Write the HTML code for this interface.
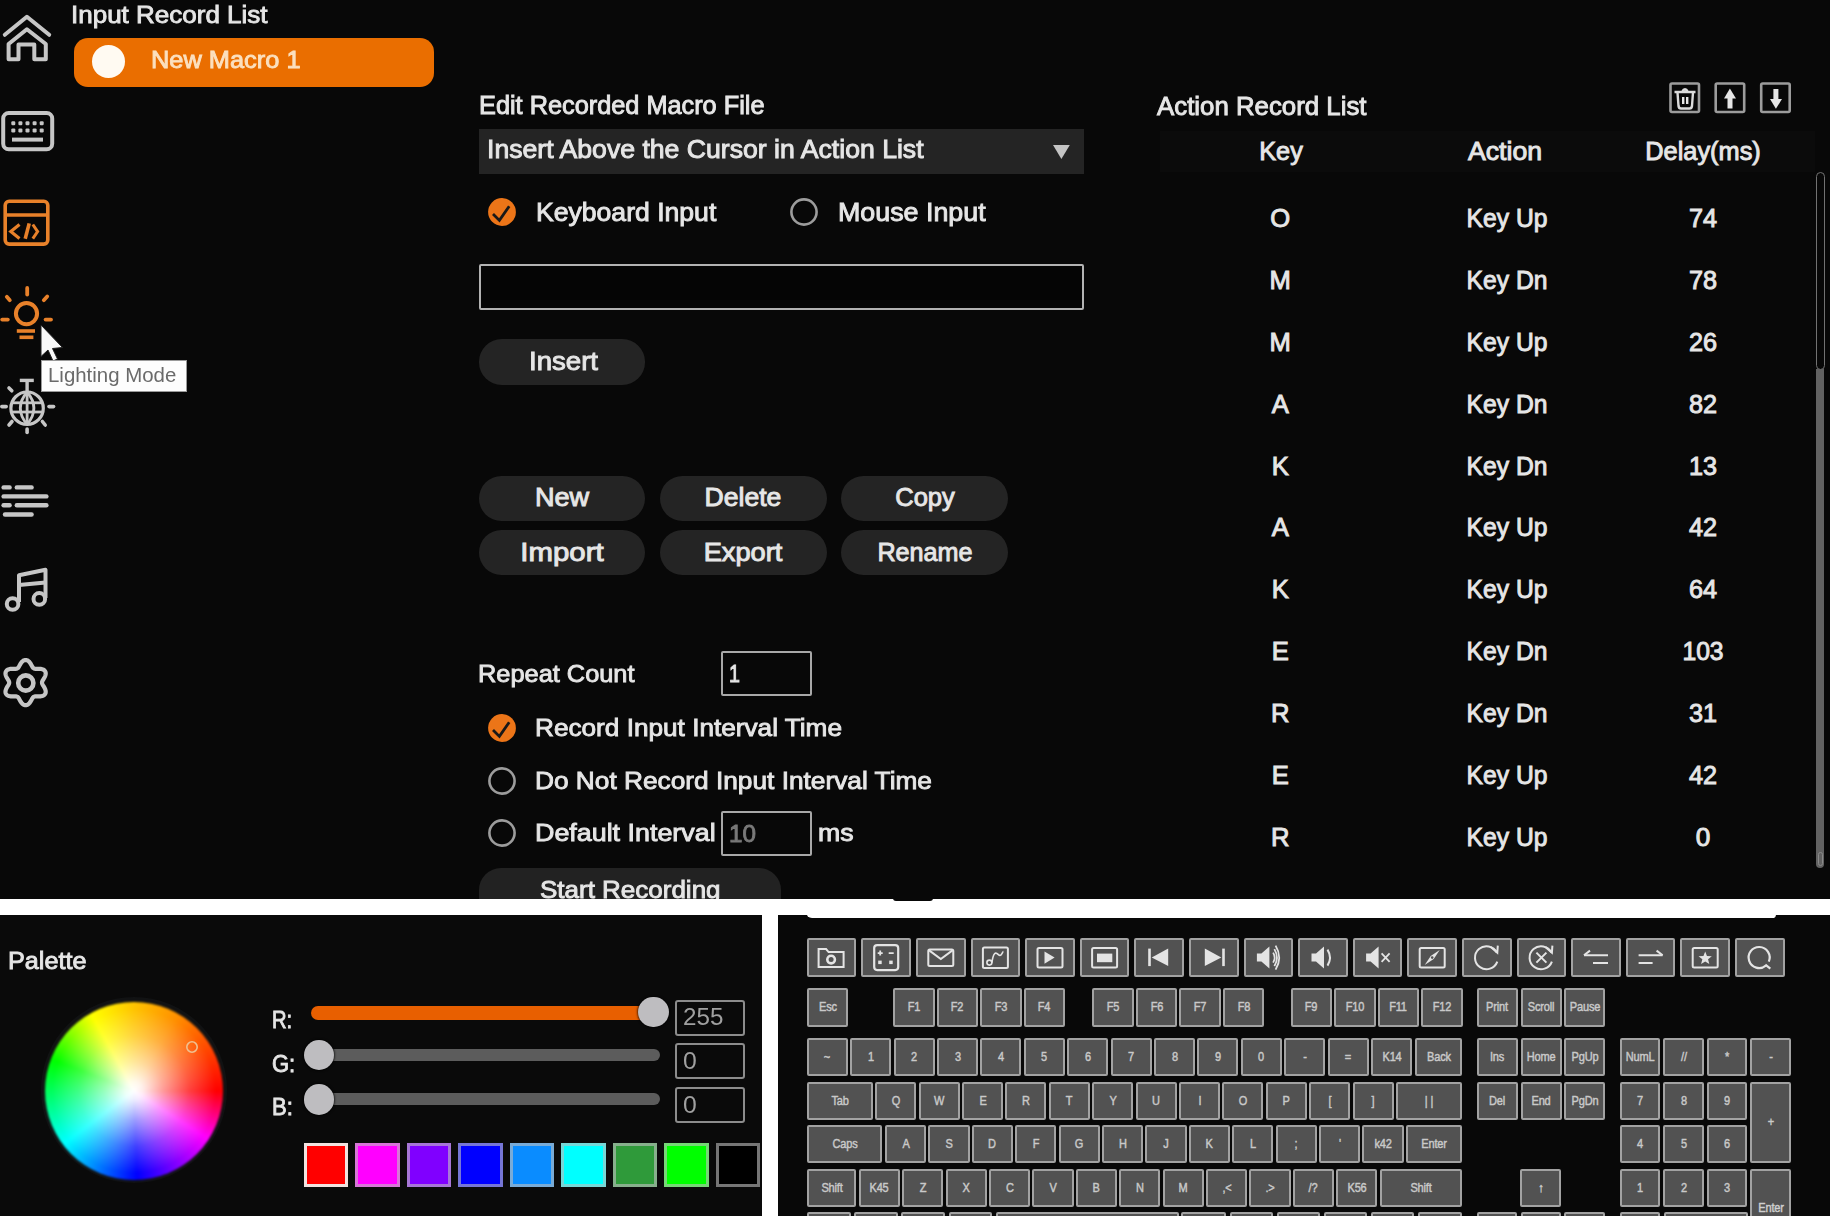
<!DOCTYPE html><html><head><meta charset="utf-8"><style>html,body{margin:0;padding:0;}body{width:1833px;height:1216px;overflow:hidden;position:relative;background:#fff;font-family:"Liberation Sans", sans-serif;}svg{position:absolute;overflow:visible}</style></head><body><div style="position:absolute;left:0px;top:0px;width:1830px;height:899px;background:#080808;"></div>
<div style="position:absolute;left:0px;top:915px;width:762px;height:301px;background:#0a0a0a;"></div>
<div style="position:absolute;left:778px;top:915px;width:1052px;height:301px;background:#080808;"></div>
<div style="position:absolute;left:806px;top:912px;width:970px;height:6px;background:#fff;border-radius:0 0 6px 10px"></div>
<div style="position:absolute;left:893px;top:896px;width:40px;height:5px;background:#080808;border-radius:0 0 3px 3px;"></div>
<svg width="80" height="720" style="left:0;top:0" viewBox="0 0 80 720" fill="none" stroke-linecap="butt">
<g stroke="#c6c6c6" stroke-width="4">
 <polyline points="4.8,34.8 26.9,16.8 49.2,34.8" stroke-linejoin="round" stroke-linecap="round"/>
 <path d="M8.6,59.2 V44 L26.9,29.2 L45.8,44 V59.2 H34.3 V44.6 H18.5 V59.2 Z" stroke-linejoin="round"/>
 <rect x="3.2" y="113.1" width="49" height="36.2" rx="5.5"/>
 <line x1="12" y1="139.6" x2="43" y2="139.6" stroke-width="4"/>
</g>
<g fill="#c6c6c6">
 <rect x="11.3" y="121.3" width="4" height="4" rx="1.2"/><rect x="18.4" y="121.3" width="4" height="4" rx="1.2"/><rect x="25.5" y="121.3" width="4" height="4" rx="1.2"/><rect x="32.6" y="121.3" width="4" height="4" rx="1.2"/><rect x="39.7" y="121.3" width="4" height="4" rx="1.2"/>
 <rect x="11.3" y="128.4" width="4" height="4" rx="1.2"/><rect x="18.4" y="128.4" width="4" height="4" rx="1.2"/><rect x="25.5" y="128.4" width="4" height="4" rx="1.2"/><rect x="32.6" y="128.4" width="4" height="4" rx="1.2"/><rect x="39.7" y="128.4" width="4" height="4" rx="1.2"/>
</g>
<g stroke="#e8812a" stroke-width="3.6">
 <rect x="5.2" y="201.3" width="42.6" height="42.8" rx="4"/>
 <line x1="5.2" y1="215" x2="47.8" y2="215" stroke-width="3.4"/>
 <polyline points="19.5,224.5 10.8,231.6 19.5,238.6" stroke-width="3.2"/>
 <line x1="29.2" y1="223.4" x2="25.2" y2="238.8" stroke-width="3.6"/>
 <polyline points="32.8,224.5 37.6,231.6 32.8,238.6" stroke-width="3"/>
 <circle cx="26.5" cy="313.6" r="10.6" stroke-width="4"/>
 <g stroke-width="3.8" stroke-linecap="round">
  <line x1="27.2" y1="288" x2="27.2" y2="294.5"/>
  <line x1="6.8" y1="296.8" x2="9.8" y2="300.2"/>
  <line x1="47.2" y1="296.5" x2="43.8" y2="300.2"/>
  <line x1="2.2" y1="319.6" x2="7.8" y2="319.6"/>
  <line x1="45.6" y1="319.6" x2="51" y2="319.6"/>
 </g>
 <line x1="16.8" y1="331" x2="35" y2="331" stroke-width="3.6"/>
 <line x1="19.5" y1="337.3" x2="33.4" y2="337.3" stroke-width="3.6"/>
</g>
<g stroke="#c6c6c6" stroke-width="3.2">
 <circle cx="27.1" cy="408.2" r="16.2"/>
 <path d="M27.1,392 Q13.5,408.2 27.1,424.4 M27.1,392 Q40.7,408.2 27.1,424.4" stroke-width="2.8"/>
 <line x1="27.1" y1="392" x2="27.1" y2="424.4" stroke-width="2.8"/>
 <line x1="11.5" y1="402.8" x2="42.7" y2="402.8" stroke-width="2.8"/>
 <line x1="11.5" y1="412" x2="42.7" y2="412" stroke-width="2.8"/>
 <line x1="19.8" y1="380.4" x2="33.8" y2="380.4" stroke-width="3.4"/>
 <path d="M27.1,380.4 V391" stroke-width="3.4"/>
 <g stroke-width="3.6" stroke-linecap="round">
  <line x1="1.8" y1="406.6" x2="6.2" y2="406.6"/>
  <line x1="49" y1="406.6" x2="53.6" y2="406.6"/>
  <line x1="9" y1="388" x2="11.8" y2="390.8"/>
  <line x1="9" y1="425" x2="12" y2="421.5"/>
  <line x1="45.2" y1="425" x2="42.4" y2="421.5"/>
  <line x1="27.1" y1="429" x2="27.1" y2="432.5"/>
 </g>
</g>
<g stroke="#c6c6c6" stroke-width="4.4" stroke-linecap="round">
 <line x1="3.6" y1="487.4" x2="9.6" y2="487.4"/><line x1="16.8" y1="487.4" x2="31.6" y2="487.4"/>
 <line x1="3.6" y1="496.4" x2="46.4" y2="496.4"/>
 <line x1="3.6" y1="505.3" x2="9.6" y2="505.3"/><line x1="16.8" y1="505.3" x2="46.4" y2="505.3"/>
 <line x1="5" y1="514.5" x2="31.6" y2="514.5"/>
</g>
<g stroke="#c6c6c6" stroke-width="4">
 <circle cx="12.6" cy="604" r="5.8"/>
 <circle cx="39.3" cy="598.9" r="5.8"/>
 <polyline points="19,602 19,575.2 45.5,569.8 45.5,598" stroke-linejoin="round"/>
 <line x1="19" y1="585" x2="45.5" y2="582.5"/>
 <path d="M25.60,660.00L26.19,660.05L26.77,660.18L27.35,660.41L27.90,660.71L28.43,661.09L28.94,661.54L29.41,662.04L29.85,662.59L30.27,663.17L30.65,663.76L31.00,664.37L31.33,664.97L31.64,665.55L31.94,666.10L32.22,666.61L32.51,667.08L32.81,667.49L33.11,667.85L33.44,668.15L33.80,668.40L34.19,668.58L34.61,668.72L35.08,668.81L35.59,668.85L36.14,668.87L36.73,668.86L37.35,668.84L38.01,668.82L38.69,668.81L39.39,668.81L40.10,668.84L40.80,668.91L41.50,669.02L42.17,669.18L42.81,669.39L43.40,669.66L43.95,669.99L44.43,670.37L44.84,670.81L45.17,671.30L45.43,671.83L45.60,672.41L45.69,673.02L45.71,673.65L45.64,674.30L45.51,674.96L45.31,675.62L45.06,676.28L44.76,676.92L44.44,677.55L44.09,678.16L43.74,678.74L43.39,679.30L43.06,679.83L42.76,680.34L42.50,680.82L42.29,681.29L42.13,681.73L42.03,682.17L42.00,682.60L42.03,683.03L42.13,683.47L42.29,683.91L42.50,684.38L42.76,684.86L43.06,685.37L43.39,685.90L43.74,686.46L44.09,687.04L44.44,687.65L44.76,688.28L45.06,688.92L45.31,689.58L45.51,690.24L45.64,690.90L45.71,691.55L45.69,692.18L45.60,692.79L45.43,693.37L45.17,693.90L44.84,694.39L44.43,694.83L43.95,695.21L43.40,695.54L42.81,695.81L42.17,696.02L41.50,696.18L40.80,696.29L40.10,696.36L39.39,696.39L38.69,696.39L38.01,696.38L37.35,696.36L36.73,696.34L36.14,696.33L35.59,696.35L35.08,696.39L34.61,696.48L34.19,696.62L33.80,696.80L33.44,697.05L33.11,697.35L32.81,697.71L32.51,698.12L32.22,698.59L31.94,699.10L31.64,699.65L31.33,700.23L31.00,700.83L30.65,701.44L30.27,702.03L29.85,702.61L29.41,703.16L28.94,703.66L28.43,704.11L27.90,704.49L27.35,704.79L26.77,705.02L26.19,705.15L25.60,705.20L25.01,705.15L24.43,705.02L23.85,704.79L23.30,704.49L22.77,704.11L22.26,703.66L21.79,703.16L21.35,702.61L20.93,702.03L20.55,701.44L20.20,700.83L19.87,700.23L19.56,699.65L19.26,699.10L18.98,698.59L18.69,698.12L18.39,697.71L18.09,697.35L17.76,697.05L17.40,696.80L17.01,696.62L16.59,696.48L16.12,696.39L15.61,696.35L15.06,696.33L14.47,696.34L13.85,696.36L13.19,696.38L12.51,696.39L11.81,696.39L11.10,696.36L10.40,696.29L9.70,696.18L9.03,696.02L8.39,695.81L7.80,695.54L7.25,695.21L6.77,694.83L6.36,694.39L6.03,693.90L5.77,693.37L5.60,692.79L5.51,692.18L5.49,691.55L5.56,690.90L5.69,690.24L5.89,689.58L6.14,688.92L6.44,688.28L6.76,687.65L7.11,687.04L7.46,686.46L7.81,685.90L8.14,685.37L8.44,684.86L8.70,684.38L8.91,683.91L9.07,683.47L9.17,683.03L9.20,682.60L9.17,682.17L9.07,681.73L8.91,681.29L8.70,680.82L8.44,680.34L8.14,679.83L7.81,679.30L7.46,678.74L7.11,678.16L6.76,677.55L6.44,676.92L6.14,676.28L5.89,675.62L5.69,674.96L5.56,674.30L5.49,673.65L5.51,673.02L5.60,672.41L5.77,671.83L6.03,671.30L6.36,670.81L6.77,670.37L7.25,669.99L7.80,669.66L8.39,669.39L9.03,669.18L9.70,669.02L10.40,668.91L11.10,668.84L11.81,668.81L12.51,668.81L13.19,668.82L13.85,668.84L14.47,668.86L15.06,668.87L15.61,668.85L16.12,668.81L16.59,668.72L17.01,668.58L17.40,668.40L17.76,668.15L18.09,667.85L18.39,667.49L18.69,667.08L18.98,666.61L19.26,666.10L19.56,665.55L19.87,664.97L20.20,664.37L20.55,663.76L20.93,663.17L21.35,662.59L21.79,662.04L22.26,661.54L22.77,661.09L23.30,660.71L23.85,660.41L24.43,660.18L25.01,660.05L25.60,660.00Z" stroke-width="4.2" stroke-linejoin="round"/>
 <circle cx="25.8" cy="683" r="7.6" stroke-width="4.6"/>
</g>
<polygon points="41,325 41,356.5 48,350 53,361 57.5,359 52.5,348.5 62.5,347.5" fill="#fafafa" stroke="#222" stroke-width="1"/>
</svg>
<div style="position:absolute;left:40.5px;top:360px;width:146.5px;height:32px;background:#fdfdfd;border:1px solid #9a9a9a;box-sizing:border-box;"></div>
<div id="t0" style="position:absolute;left:47.5px;transform-origin:0 0;top:365.5px;font-size:19.39px;line-height:1;font-weight:400;color:#6a6a6a;white-space:nowrap;transform:scaleX(1.0535);">Lighting Mode</div>
<div id="t1" style="position:absolute;left:70.5px;transform-origin:0 0;top:3.5px;font-size:23.68px;line-height:1;font-weight:400;color:#e6e6e6;white-space:nowrap;transform:scaleX(1.0984);-webkit-text-stroke:0.85px #e6e6e6;">Input Record List</div>
<div style="position:absolute;left:73.5px;top:38.2px;width:360.7px;height:49.1px;background:#ea6e00;border-radius:14px;"></div>
<div style="position:absolute;left:92.1px;top:45.4px;width:32.8px;height:32.8px;border-radius:50%;background:#fffaf2"></div>
<div id="t2" style="position:absolute;left:151.3px;transform-origin:0 0;top:49.4px;font-size:23.55px;line-height:1;font-weight:400;color:#fbe0bf;white-space:nowrap;transform:scaleX(1.0779);-webkit-text-stroke:0.85px #fbe0bf;">New Macro 1</div>
<div id="t3" style="position:absolute;left:478.5px;transform-origin:0 0;top:93.4px;font-size:24.93px;line-height:1;font-weight:400;color:#e6e6e6;white-space:nowrap;transform:scaleX(1.0154);-webkit-text-stroke:0.9px #e6e6e6;">Edit Recorded Macro File</div>
<div style="position:absolute;left:478.7px;top:128.5px;width:605px;height:45.5px;background:#242424;"></div>
<div id="t4" style="position:absolute;left:486.8px;transform-origin:0 0;top:136.9px;font-size:25.48px;line-height:1;font-weight:400;color:#e6e6e6;white-space:nowrap;transform:scaleX(1.0454);-webkit-text-stroke:0.92px #e6e6e6;">Insert Above the Cursor in Action List</div>
<svg width="20" height="20" style="left:1050px;top:142px"><polygon points="3,3 19.8,3 11.4,17" fill="#c4c4c4"/></svg>
<svg width="40" height="40" style="left:481.8px;top:191.8px"><circle cx="20" cy="20" r="13.9" fill="#ec7518"/><polyline points="11,22 17.4,28.4 27.2,14.2" fill="none" stroke="#181818" stroke-width="2.8"/></svg>
<div id="t5" style="position:absolute;left:535.8px;transform-origin:0 0;top:199.8px;font-size:25.07px;line-height:1;font-weight:400;color:#e6e6e6;white-space:nowrap;transform:scaleX(1.0606);-webkit-text-stroke:0.9px #e6e6e6;">Keyboard Input</div>
<svg width="40" height="40" style="left:783.6px;top:191.8px"><circle cx="20" cy="20" r="12.6" fill="none" stroke="#9c9c9c" stroke-width="2.6"/></svg>
<div id="t6" style="position:absolute;left:837.9px;transform-origin:0 0;top:199.7px;font-size:25.07px;line-height:1;font-weight:400;color:#e6e6e6;white-space:nowrap;transform:scaleX(1.0701);-webkit-text-stroke:0.9px #e6e6e6;">Mouse Input</div>
<div style="position:absolute;left:479px;top:264px;width:604.5px;height:45.6px;border:2.5px solid #b2b2b2;border-radius:2px;box-sizing:border-box;background:#050505;"></div>
<div style="position:absolute;left:479.3px;top:339.3px;width:166px;height:45.7px;background:#242424;border-radius:22.85px;"></div>
<div id="t7" style="position:absolute;left:528.6px;transform-origin:0 0;top:347.9px;font-size:26.18px;line-height:1;font-weight:400;color:#e6e6e6;white-space:nowrap;transform:scaleX(1.0548);-webkit-text-stroke:0.94px #e6e6e6;">Insert</div>
<div style="position:absolute;left:478.5px;top:475.5px;width:166.5px;height:45.5px;background:#242424;border-radius:22.75px;"></div>
<div id="t8" style="position:absolute;left:561.8px;transform-origin:0 0;top:484.8px;font-size:25.35px;line-height:1;font-weight:400;color:#e6e6e6;white-space:nowrap;transform:translateX(-50%) scaleX(1.0695);transform-origin:50% 0;-webkit-text-stroke:0.91px #e6e6e6;">New</div>
<div style="position:absolute;left:660px;top:475.5px;width:166.5px;height:45.5px;background:#242424;border-radius:22.75px;"></div>
<div id="t9" style="position:absolute;left:743.2px;transform-origin:0 0;top:484.8px;font-size:25.35px;line-height:1;font-weight:400;color:#e6e6e6;white-space:nowrap;transform:translateX(-50%) scaleX(1.0482);transform-origin:50% 0;-webkit-text-stroke:0.91px #e6e6e6;">Delete</div>
<div style="position:absolute;left:841.3px;top:475.5px;width:166.5px;height:45.5px;background:#242424;border-radius:22.75px;"></div>
<div id="t10" style="position:absolute;left:924.5px;transform-origin:0 0;top:484.8px;font-size:25.35px;line-height:1;font-weight:400;color:#e6e6e6;white-space:nowrap;transform:translateX(-50%) scaleX(1.0061);transform-origin:50% 0;-webkit-text-stroke:0.91px #e6e6e6;">Copy</div>
<div style="position:absolute;left:478.5px;top:530.3px;width:166.5px;height:45.200000000000045px;background:#242424;border-radius:22.600000000000023px;"></div>
<div id="t11" style="position:absolute;left:561.8px;transform-origin:0 0;top:539.5px;font-size:25.35px;line-height:1;font-weight:400;color:#e6e6e6;white-space:nowrap;transform:translateX(-50%) scaleX(1.1592);transform-origin:50% 0;-webkit-text-stroke:0.91px #e6e6e6;">Import</div>
<div style="position:absolute;left:660px;top:530.3px;width:166.5px;height:45.200000000000045px;background:#242424;border-radius:22.600000000000023px;"></div>
<div id="t12" style="position:absolute;left:743.2px;transform-origin:0 0;top:539.5px;font-size:25.35px;line-height:1;font-weight:400;color:#e6e6e6;white-space:nowrap;transform:translateX(-50%) scaleX(1.0735);transform-origin:50% 0;-webkit-text-stroke:0.91px #e6e6e6;">Export</div>
<div style="position:absolute;left:841.3px;top:530.3px;width:166.5px;height:45.200000000000045px;background:#242424;border-radius:22.600000000000023px;"></div>
<div id="t13" style="position:absolute;left:924.5px;transform-origin:0 0;top:539.5px;font-size:25.35px;line-height:1;font-weight:400;color:#e6e6e6;white-space:nowrap;transform:translateX(-50%) scaleX(0.9939);transform-origin:50% 0;-webkit-text-stroke:0.91px #e6e6e6;">Rename</div>
<div id="t14" style="position:absolute;left:478.3px;transform-origin:0 0;top:662.4px;font-size:23.82px;line-height:1;font-weight:400;color:#e6e6e6;white-space:nowrap;transform:scaleX(1.0651);-webkit-text-stroke:0.86px #e6e6e6;">Repeat Count</div>
<div style="position:absolute;left:720.5px;top:651px;width:91px;height:45.3px;border:2.5px solid #a8a8a8;border-radius:2px;box-sizing:border-box;"></div>
<div id="t15" style="position:absolute;left:729.3px;transform-origin:0 0;top:662.4px;font-size:23.82px;line-height:1;font-weight:400;color:#e6e6e6;white-space:nowrap;transform:scaleX(0.8290);-webkit-text-stroke:0.86px #e6e6e6;">1</div>
<svg width="40" height="40" style="left:481.6px;top:708.4px"><circle cx="20" cy="20" r="13.9" fill="#ec7518"/><polyline points="11,22 17.4,28.4 27.2,14.2" fill="none" stroke="#181818" stroke-width="2.8"/></svg>
<div id="t16" style="position:absolute;left:535.1px;transform-origin:0 0;top:715.8px;font-size:24.38px;line-height:1;font-weight:400;color:#e6e6e6;white-space:nowrap;transform:scaleX(1.0739);-webkit-text-stroke:0.88px #e6e6e6;">Record Input Interval Time</div>
<svg width="40" height="40" style="left:481.6px;top:760.8px"><circle cx="20" cy="20" r="12.6" fill="none" stroke="#9c9c9c" stroke-width="2.6"/></svg>
<div id="t17" style="position:absolute;left:535.1px;transform-origin:0 0;top:768.8px;font-size:24.38px;line-height:1;font-weight:400;color:#e6e6e6;white-space:nowrap;transform:scaleX(1.0773);-webkit-text-stroke:0.88px #e6e6e6;">Do Not Record Input Interval Time</div>
<svg width="40" height="40" style="left:481.6px;top:813.1px"><circle cx="20" cy="20" r="12.6" fill="none" stroke="#9c9c9c" stroke-width="2.6"/></svg>
<div id="t18" style="position:absolute;left:535.1px;transform-origin:0 0;top:821.2px;font-size:24.38px;line-height:1;font-weight:400;color:#e6e6e6;white-space:nowrap;transform:scaleX(1.1017);-webkit-text-stroke:0.88px #e6e6e6;">Default Interval</div>
<div style="position:absolute;left:720.5px;top:811.3px;width:91px;height:45.2px;border:2.5px solid #a8a8a8;border-radius:2px;box-sizing:border-box;"></div>
<div id="t19" style="position:absolute;left:729.3px;transform-origin:0 0;top:821.7px;font-size:23.82px;line-height:1;font-weight:400;color:#7a7a7a;white-space:nowrap;transform:scaleX(1.0171);-webkit-text-stroke:0.86px #7a7a7a;">10</div>
<div id="t20" style="position:absolute;left:817.6px;transform-origin:0 0;top:821.2px;font-size:24.38px;line-height:1;font-weight:400;color:#e6e6e6;white-space:nowrap;transform:scaleX(1.0955);-webkit-text-stroke:0.88px #e6e6e6;">ms</div>
<div style="position:absolute;left:0;top:0;width:1830px;height:899px;overflow:hidden"><div style="position:absolute;left:479.2px;top:868px;width:301.8px;height:60px;border-radius:22px;background:#222"></div>
<div id="t21" style="position:absolute;left:540.1px;transform-origin:0 0;top:877.8px;font-size:24.38px;line-height:1;font-weight:400;color:#e6e6e6;white-space:nowrap;transform:scaleX(1.0661);-webkit-text-stroke:0.88px #e6e6e6;">Start Recording</div>
</div>
<div style="position:absolute;left:1160px;top:131px;width:655px;height:41px;background:#0b0b0b;"></div>
<div id="t22" style="position:absolute;left:1157.4px;transform-origin:0 0;top:93.9px;font-size:25.35px;line-height:1;font-weight:400;color:#e6e6e6;white-space:nowrap;transform:scaleX(1.0189);-webkit-text-stroke:0.91px #e6e6e6;">Action Record List</div>
<svg width="140" height="40" style="left:1660px;top:78px" viewBox="1660 78 140 40">
<g fill="none" stroke="#9c9c9c" stroke-width="2.6">
<rect x="1670.5" y="83.5" width="28.5" height="28.5" rx="1.5"/>
<rect x="1715.7" y="83.5" width="28.5" height="28.5" rx="1.5"/>
<rect x="1761.2" y="83.5" width="28.5" height="28.5" rx="1.5"/>
</g>
<g fill="none" stroke="#dcdcdc" stroke-width="2.4">
<path d="M1674.5,92 H1695.5 M1682,92 Q1685,86.5 1688,92 M1677.5,92.5 L1678.5,106 Q1678.8,108.5 1681,108.5 H1689.5 Q1691.7,108.5 1692,106 L1693,92.5"/>
</g>
<g fill="#e6e6e6">
<rect x="1682" y="97" width="2.4" height="7"/><rect x="1686" y="97" width="2.4" height="7"/>
<polygon points="1729.9,88.5 1736,98.5 1724,98.5"/><rect x="1727.5" y="97" width="5" height="11.5"/>
<polygon points="1775.9,108.8 1782,99 1770,99"/><rect x="1773.4" y="89" width="5" height="11"/>
</g>
</svg>
<div id="t23" style="position:absolute;left:1280.5px;transform-origin:0 0;top:138.6px;font-size:25.76px;line-height:1;font-weight:400;color:#e6e6e6;white-space:nowrap;transform:translateX(-50%) scaleX(0.9806);transform-origin:50% 0;-webkit-text-stroke:0.93px #e6e6e6;">Key</div>
<div id="t24" style="position:absolute;left:1505.3px;transform-origin:0 0;top:138.6px;font-size:25.76px;line-height:1;font-weight:400;color:#e6e6e6;white-space:nowrap;transform:translateX(-50%) scaleX(1.0352);transform-origin:50% 0;-webkit-text-stroke:0.93px #e6e6e6;">Action</div>
<div id="t25" style="position:absolute;left:1703.0px;transform-origin:0 0;top:138.6px;font-size:25.76px;line-height:1;font-weight:400;color:#e6e6e6;white-space:nowrap;transform:translateX(-50%) scaleX(0.9847);transform-origin:50% 0;-webkit-text-stroke:0.93px #e6e6e6;">Delay(ms)</div>
<div id="t26" style="position:absolute;left:1280.2px;transform-origin:0 0;top:205.8px;font-size:25.62px;line-height:1;font-weight:400;color:#e6e6e6;white-space:nowrap;transform:translateX(-50%) scaleX(1.0000);transform-origin:50% 0;-webkit-text-stroke:0.92px #e6e6e6;">O</div>
<div id="t27" style="position:absolute;left:1506.7px;transform-origin:0 0;top:205.8px;font-size:25.62px;line-height:1;font-weight:400;color:#e6e6e6;white-space:nowrap;transform:translateX(-50%) scaleX(0.9630);transform-origin:50% 0;-webkit-text-stroke:0.92px #e6e6e6;">Key Up</div>
<div id="t28" style="position:absolute;left:1703.0px;transform-origin:0 0;top:205.8px;font-size:25.62px;line-height:1;font-weight:400;color:#e6e6e6;white-space:nowrap;transform:translateX(-50%) scaleX(0.9865);transform-origin:50% 0;-webkit-text-stroke:0.92px #e6e6e6;">74</div>
<div id="t29" style="position:absolute;left:1280.2px;transform-origin:0 0;top:267.7px;font-size:25.62px;line-height:1;font-weight:400;color:#e6e6e6;white-space:nowrap;transform:translateX(-50%) scaleX(1.0000);transform-origin:50% 0;-webkit-text-stroke:0.92px #e6e6e6;">M</div>
<div id="t30" style="position:absolute;left:1506.7px;transform-origin:0 0;top:267.7px;font-size:25.62px;line-height:1;font-weight:400;color:#e6e6e6;white-space:nowrap;transform:translateX(-50%) scaleX(0.9630);transform-origin:50% 0;-webkit-text-stroke:0.92px #e6e6e6;">Key Dn</div>
<div id="t31" style="position:absolute;left:1703.0px;transform-origin:0 0;top:267.7px;font-size:25.62px;line-height:1;font-weight:400;color:#e6e6e6;white-space:nowrap;transform:translateX(-50%) scaleX(0.9865);transform-origin:50% 0;-webkit-text-stroke:0.92px #e6e6e6;">78</div>
<div id="t32" style="position:absolute;left:1280.2px;transform-origin:0 0;top:329.6px;font-size:25.62px;line-height:1;font-weight:400;color:#e6e6e6;white-space:nowrap;transform:translateX(-50%) scaleX(1.0000);transform-origin:50% 0;-webkit-text-stroke:0.92px #e6e6e6;">M</div>
<div id="t33" style="position:absolute;left:1506.7px;transform-origin:0 0;top:329.6px;font-size:25.62px;line-height:1;font-weight:400;color:#e6e6e6;white-space:nowrap;transform:translateX(-50%) scaleX(0.9630);transform-origin:50% 0;-webkit-text-stroke:0.92px #e6e6e6;">Key Up</div>
<div id="t34" style="position:absolute;left:1703.0px;transform-origin:0 0;top:329.6px;font-size:25.62px;line-height:1;font-weight:400;color:#e6e6e6;white-space:nowrap;transform:translateX(-50%) scaleX(0.9865);transform-origin:50% 0;-webkit-text-stroke:0.92px #e6e6e6;">26</div>
<div id="t35" style="position:absolute;left:1280.2px;transform-origin:0 0;top:391.6px;font-size:25.62px;line-height:1;font-weight:400;color:#e6e6e6;white-space:nowrap;transform:translateX(-50%) scaleX(1.0000);transform-origin:50% 0;-webkit-text-stroke:0.92px #e6e6e6;">A</div>
<div id="t36" style="position:absolute;left:1506.7px;transform-origin:0 0;top:391.6px;font-size:25.62px;line-height:1;font-weight:400;color:#e6e6e6;white-space:nowrap;transform:translateX(-50%) scaleX(0.9630);transform-origin:50% 0;-webkit-text-stroke:0.92px #e6e6e6;">Key Dn</div>
<div id="t37" style="position:absolute;left:1703.0px;transform-origin:0 0;top:391.6px;font-size:25.62px;line-height:1;font-weight:400;color:#e6e6e6;white-space:nowrap;transform:translateX(-50%) scaleX(0.9865);transform-origin:50% 0;-webkit-text-stroke:0.92px #e6e6e6;">82</div>
<div id="t38" style="position:absolute;left:1280.2px;transform-origin:0 0;top:453.5px;font-size:25.62px;line-height:1;font-weight:400;color:#e6e6e6;white-space:nowrap;transform:translateX(-50%) scaleX(1.0000);transform-origin:50% 0;-webkit-text-stroke:0.92px #e6e6e6;">K</div>
<div id="t39" style="position:absolute;left:1506.7px;transform-origin:0 0;top:453.5px;font-size:25.62px;line-height:1;font-weight:400;color:#e6e6e6;white-space:nowrap;transform:translateX(-50%) scaleX(0.9630);transform-origin:50% 0;-webkit-text-stroke:0.92px #e6e6e6;">Key Dn</div>
<div id="t40" style="position:absolute;left:1703.0px;transform-origin:0 0;top:453.5px;font-size:25.62px;line-height:1;font-weight:400;color:#e6e6e6;white-space:nowrap;transform:translateX(-50%) scaleX(0.9865);transform-origin:50% 0;-webkit-text-stroke:0.92px #e6e6e6;">13</div>
<div id="t41" style="position:absolute;left:1280.2px;transform-origin:0 0;top:515.4px;font-size:25.62px;line-height:1;font-weight:400;color:#e6e6e6;white-space:nowrap;transform:translateX(-50%) scaleX(1.0000);transform-origin:50% 0;-webkit-text-stroke:0.92px #e6e6e6;">A</div>
<div id="t42" style="position:absolute;left:1506.7px;transform-origin:0 0;top:515.4px;font-size:25.62px;line-height:1;font-weight:400;color:#e6e6e6;white-space:nowrap;transform:translateX(-50%) scaleX(0.9630);transform-origin:50% 0;-webkit-text-stroke:0.92px #e6e6e6;">Key Up</div>
<div id="t43" style="position:absolute;left:1703.0px;transform-origin:0 0;top:515.4px;font-size:25.62px;line-height:1;font-weight:400;color:#e6e6e6;white-space:nowrap;transform:translateX(-50%) scaleX(0.9865);transform-origin:50% 0;-webkit-text-stroke:0.92px #e6e6e6;">42</div>
<div id="t44" style="position:absolute;left:1280.2px;transform-origin:0 0;top:577.3px;font-size:25.62px;line-height:1;font-weight:400;color:#e6e6e6;white-space:nowrap;transform:translateX(-50%) scaleX(1.0000);transform-origin:50% 0;-webkit-text-stroke:0.92px #e6e6e6;">K</div>
<div id="t45" style="position:absolute;left:1506.7px;transform-origin:0 0;top:577.3px;font-size:25.62px;line-height:1;font-weight:400;color:#e6e6e6;white-space:nowrap;transform:translateX(-50%) scaleX(0.9630);transform-origin:50% 0;-webkit-text-stroke:0.92px #e6e6e6;">Key Up</div>
<div id="t46" style="position:absolute;left:1703.0px;transform-origin:0 0;top:577.3px;font-size:25.62px;line-height:1;font-weight:400;color:#e6e6e6;white-space:nowrap;transform:translateX(-50%) scaleX(0.9865);transform-origin:50% 0;-webkit-text-stroke:0.92px #e6e6e6;">64</div>
<div id="t47" style="position:absolute;left:1280.2px;transform-origin:0 0;top:639.2px;font-size:25.62px;line-height:1;font-weight:400;color:#e6e6e6;white-space:nowrap;transform:translateX(-50%) scaleX(1.0000);transform-origin:50% 0;-webkit-text-stroke:0.92px #e6e6e6;">E</div>
<div id="t48" style="position:absolute;left:1506.7px;transform-origin:0 0;top:639.2px;font-size:25.62px;line-height:1;font-weight:400;color:#e6e6e6;white-space:nowrap;transform:translateX(-50%) scaleX(0.9630);transform-origin:50% 0;-webkit-text-stroke:0.92px #e6e6e6;">Key Dn</div>
<div id="t49" style="position:absolute;left:1703.0px;transform-origin:0 0;top:639.2px;font-size:25.62px;line-height:1;font-weight:400;color:#e6e6e6;white-space:nowrap;transform:translateX(-50%) scaleX(0.9637);transform-origin:50% 0;-webkit-text-stroke:0.92px #e6e6e6;">103</div>
<div id="t50" style="position:absolute;left:1280.2px;transform-origin:0 0;top:701.1px;font-size:25.62px;line-height:1;font-weight:400;color:#e6e6e6;white-space:nowrap;transform:translateX(-50%) scaleX(1.0000);transform-origin:50% 0;-webkit-text-stroke:0.92px #e6e6e6;">R</div>
<div id="t51" style="position:absolute;left:1506.7px;transform-origin:0 0;top:701.1px;font-size:25.62px;line-height:1;font-weight:400;color:#e6e6e6;white-space:nowrap;transform:translateX(-50%) scaleX(0.9630);transform-origin:50% 0;-webkit-text-stroke:0.92px #e6e6e6;">Key Dn</div>
<div id="t52" style="position:absolute;left:1703.0px;transform-origin:0 0;top:701.1px;font-size:25.62px;line-height:1;font-weight:400;color:#e6e6e6;white-space:nowrap;transform:translateX(-50%) scaleX(0.9865);transform-origin:50% 0;-webkit-text-stroke:0.92px #e6e6e6;">31</div>
<div id="t53" style="position:absolute;left:1280.2px;transform-origin:0 0;top:763.0px;font-size:25.62px;line-height:1;font-weight:400;color:#e6e6e6;white-space:nowrap;transform:translateX(-50%) scaleX(1.0000);transform-origin:50% 0;-webkit-text-stroke:0.92px #e6e6e6;">E</div>
<div id="t54" style="position:absolute;left:1506.7px;transform-origin:0 0;top:763.0px;font-size:25.62px;line-height:1;font-weight:400;color:#e6e6e6;white-space:nowrap;transform:translateX(-50%) scaleX(0.9630);transform-origin:50% 0;-webkit-text-stroke:0.92px #e6e6e6;">Key Up</div>
<div id="t55" style="position:absolute;left:1703.0px;transform-origin:0 0;top:763.0px;font-size:25.62px;line-height:1;font-weight:400;color:#e6e6e6;white-space:nowrap;transform:translateX(-50%) scaleX(0.9865);transform-origin:50% 0;-webkit-text-stroke:0.92px #e6e6e6;">42</div>
<div id="t56" style="position:absolute;left:1280.2px;transform-origin:0 0;top:824.9px;font-size:25.62px;line-height:1;font-weight:400;color:#e6e6e6;white-space:nowrap;transform:translateX(-50%) scaleX(1.0000);transform-origin:50% 0;-webkit-text-stroke:0.92px #e6e6e6;">R</div>
<div id="t57" style="position:absolute;left:1506.7px;transform-origin:0 0;top:824.9px;font-size:25.62px;line-height:1;font-weight:400;color:#e6e6e6;white-space:nowrap;transform:translateX(-50%) scaleX(0.9630);transform-origin:50% 0;-webkit-text-stroke:0.92px #e6e6e6;">Key Up</div>
<div id="t58" style="position:absolute;left:1703.0px;transform-origin:0 0;top:824.9px;font-size:25.62px;line-height:1;font-weight:400;color:#e6e6e6;white-space:nowrap;transform:translateX(-50%) scaleX(1.0226);transform-origin:50% 0;-webkit-text-stroke:0.92px #e6e6e6;">0</div>
<div style="position:absolute;left:1815.5px;top:172px;width:9px;height:198px;border:1.8px solid #727272;border-radius:4.5px;box-sizing:border-box;"></div>
<div style="position:absolute;left:1816px;top:369px;width:8px;height:499px;background:#626262;border-radius:0 0 4px 4px;"></div>
<div style="position:absolute;left:1817.5px;top:852px;width:5px;height:14px;border:1.2px solid #8a8a8a;border-radius:2.5px;box-sizing:border-box;"></div>
<div id="t59" style="position:absolute;left:7.9px;transform-origin:0 0;top:948.5px;font-size:24.79px;line-height:1;font-weight:400;color:#e6e6e6;white-space:nowrap;transform:scaleX(1.0176);-webkit-text-stroke:0.89px #e6e6e6;">Palette</div>
<div style="position:absolute;left:40.7px;top:997.1px;width:186px;height:186px;border-radius:50%;background:#111213"></div>
<div style="position:absolute;left:44.7px;top:1002.1px;width:178px;height:178px;border-radius:50%;filter:blur(0.8px);background:radial-gradient(circle closest-side, #ffffff 0%, rgba(255,255,255,0.92) 10%, rgba(255,255,255,0.6) 33%, rgba(255,255,255,0.25) 62%, rgba(255,255,255,0) 92%),conic-gradient(from 0deg, #ffc400 0deg, #ff9000 30deg, #ff0000 90deg, #ff00ff 123deg, #0000ff 178deg, #00ffff 233deg, #00ff00 291deg, #ffff00 331deg, #ffc400 360deg)"></div>
<svg width="20" height="20" style="left:181.5px;top:1037.3px"><circle cx="10" cy="10" r="5.2" fill="none" stroke="#f0c090" stroke-width="1.6"/></svg>
<div id="t60" style="position:absolute;left:271.7px;transform-origin:0 0;top:1007.6px;font-size:23.96px;line-height:1;font-weight:400;color:#e6e6e6;white-space:nowrap;transform:scaleX(0.8433);-webkit-text-stroke:0.86px #e6e6e6;">R:</div>
<div id="t61" style="position:absolute;left:271.7px;transform-origin:0 0;top:1051.6px;font-size:23.96px;line-height:1;font-weight:400;color:#e6e6e6;white-space:nowrap;transform:scaleX(0.9179);-webkit-text-stroke:0.86px #e6e6e6;">G:</div>
<div id="t62" style="position:absolute;left:271.7px;transform-origin:0 0;top:1094.6px;font-size:23.96px;line-height:1;font-weight:400;color:#e6e6e6;white-space:nowrap;transform:scaleX(0.9197);-webkit-text-stroke:0.86px #e6e6e6;">B:</div>
<div style="position:absolute;left:311.2px;top:1005.5px;width:349.2px;height:14px;background:#e85f00;border-radius:7px;"></div>
<div style="position:absolute;left:311.2px;top:1048.8px;width:349.2px;height:12.7px;background:#5c5c5c;border-radius:6.35px;"></div>
<div style="position:absolute;left:311.2px;top:1092.7px;width:349.2px;height:12.7px;background:#5c5c5c;border-radius:6.35px;"></div>
<div style="position:absolute;left:638.4px;top:996.5px;width:30.4px;height:30.4px;border-radius:50%;background:#bebdc0;box-shadow:0 0 2px 1px rgba(0,0,0,0.6)"></div>
<div style="position:absolute;left:304.0px;top:1040.1px;width:30.4px;height:30.4px;border-radius:50%;background:#bebdc0;box-shadow:0 0 2px 1px rgba(0,0,0,0.6)"></div>
<div style="position:absolute;left:304.0px;top:1084.2px;width:30.4px;height:30.4px;border-radius:50%;background:#bebdc0;box-shadow:0 0 2px 1px rgba(0,0,0,0.6)"></div>
<div style="position:absolute;left:674.6px;top:999.6px;width:70px;height:35.999999999999886px;border:2.6px solid #8c8c8c;border-radius:3px;box-sizing:border-box;"></div>
<div id="t63" style="position:absolute;left:683.0px;transform-origin:0 0;top:1006.0px;font-size:23.13px;line-height:1;font-weight:400;color:#a0a0a0;white-space:nowrap;transform:scaleX(1.0455);">255</div>
<div style="position:absolute;left:674.6px;top:1043.2px;width:70px;height:36.200000000000045px;border:2.6px solid #8c8c8c;border-radius:3px;box-sizing:border-box;"></div>
<div id="t64" style="position:absolute;left:683.0px;transform-origin:0 0;top:1050.2px;font-size:23.13px;line-height:1;font-weight:400;color:#a0a0a0;white-space:nowrap;transform:scaleX(1.0708);">0</div>
<div style="position:absolute;left:674.6px;top:1087.1px;width:70px;height:36.100000000000136px;border:2.6px solid #8c8c8c;border-radius:3px;box-sizing:border-box;"></div>
<div id="t65" style="position:absolute;left:683.0px;transform-origin:0 0;top:1093.8px;font-size:23.13px;line-height:1;font-weight:400;color:#a0a0a0;white-space:nowrap;transform:scaleX(1.0708);">0</div>
<div style="position:absolute;left:303.9px;top:1143.1px;width:44.6px;height:44.3px;background:#ff0000;border:3.4px solid #f2e2e0;box-sizing:border-box;"></div>
<div style="position:absolute;left:355.4px;top:1143.1px;width:44.6px;height:44.3px;background:#ff00ff;border:3.4px solid rgba(190,190,190,0.62);box-sizing:border-box;"></div>
<div style="position:absolute;left:406.9px;top:1143.1px;width:44.6px;height:44.3px;background:#8000ff;border:3.4px solid rgba(190,190,190,0.62);box-sizing:border-box;"></div>
<div style="position:absolute;left:458.4px;top:1143.1px;width:44.6px;height:44.3px;background:#0000ff;border:3.4px solid rgba(190,190,190,0.62);box-sizing:border-box;"></div>
<div style="position:absolute;left:509.9px;top:1143.1px;width:44.6px;height:44.3px;background:#0a8cff;border:3.4px solid rgba(190,190,190,0.62);box-sizing:border-box;"></div>
<div style="position:absolute;left:561.4px;top:1143.1px;width:44.6px;height:44.3px;background:#00ffff;border:3.4px solid rgba(190,190,190,0.62);box-sizing:border-box;"></div>
<div style="position:absolute;left:612.9px;top:1143.1px;width:44.6px;height:44.3px;background:#2f9a3a;border:3.4px solid rgba(190,190,190,0.62);box-sizing:border-box;"></div>
<div style="position:absolute;left:664.4px;top:1143.1px;width:44.6px;height:44.3px;background:#00ff00;border:3.4px solid rgba(190,190,190,0.62);box-sizing:border-box;"></div>
<div style="position:absolute;left:715.9px;top:1143.1px;width:44.6px;height:44.3px;background:#000000;border:3.4px solid rgba(190,190,190,0.62);box-sizing:border-box;"></div>
<div style="position:absolute;left:778px;top:915px;width:1052px;height:301px;overflow:hidden">
<div style="position:absolute;left:28.7px;top:23.1px;width:49.8px;height:39.0px;background:#525252;border:2px solid #a2a2a2;box-sizing:border-box;border-radius:2px;"></div>
<div style="position:absolute;left:83.3px;top:23.1px;width:49.8px;height:39.0px;background:#525252;border:2px solid #a2a2a2;box-sizing:border-box;border-radius:2px;"></div>
<div style="position:absolute;left:137.9px;top:23.1px;width:49.8px;height:39.0px;background:#525252;border:2px solid #a2a2a2;box-sizing:border-box;border-radius:2px;"></div>
<div style="position:absolute;left:192.5px;top:23.1px;width:49.8px;height:39.0px;background:#525252;border:2px solid #a2a2a2;box-sizing:border-box;border-radius:2px;"></div>
<div style="position:absolute;left:247.1px;top:23.1px;width:49.8px;height:39.0px;background:#525252;border:2px solid #a2a2a2;box-sizing:border-box;border-radius:2px;"></div>
<div style="position:absolute;left:301.7px;top:23.1px;width:49.8px;height:39.0px;background:#525252;border:2px solid #a2a2a2;box-sizing:border-box;border-radius:2px;"></div>
<div style="position:absolute;left:356.3px;top:23.1px;width:49.8px;height:39.0px;background:#525252;border:2px solid #a2a2a2;box-sizing:border-box;border-radius:2px;"></div>
<div style="position:absolute;left:410.9px;top:23.1px;width:49.8px;height:39.0px;background:#525252;border:2px solid #a2a2a2;box-sizing:border-box;border-radius:2px;"></div>
<div style="position:absolute;left:465.5px;top:23.1px;width:49.8px;height:39.0px;background:#525252;border:2px solid #a2a2a2;box-sizing:border-box;border-radius:2px;"></div>
<div style="position:absolute;left:520.1px;top:23.1px;width:49.8px;height:39.0px;background:#525252;border:2px solid #a2a2a2;box-sizing:border-box;border-radius:2px;"></div>
<div style="position:absolute;left:574.7px;top:23.1px;width:49.8px;height:39.0px;background:#525252;border:2px solid #a2a2a2;box-sizing:border-box;border-radius:2px;"></div>
<div style="position:absolute;left:629.3px;top:23.1px;width:49.8px;height:39.0px;background:#525252;border:2px solid #a2a2a2;box-sizing:border-box;border-radius:2px;"></div>
<div style="position:absolute;left:683.9px;top:23.1px;width:49.8px;height:39.0px;background:#525252;border:2px solid #a2a2a2;box-sizing:border-box;border-radius:2px;"></div>
<div style="position:absolute;left:738.5px;top:23.1px;width:49.8px;height:39.0px;background:#525252;border:2px solid #a2a2a2;box-sizing:border-box;border-radius:2px;"></div>
<div style="position:absolute;left:793.1px;top:23.1px;width:49.8px;height:39.0px;background:#525252;border:2px solid #a2a2a2;box-sizing:border-box;border-radius:2px;"></div>
<div style="position:absolute;left:847.7px;top:23.1px;width:49.8px;height:39.0px;background:#525252;border:2px solid #a2a2a2;box-sizing:border-box;border-radius:2px;"></div>
<div style="position:absolute;left:902.3px;top:23.1px;width:49.8px;height:39.0px;background:#525252;border:2px solid #a2a2a2;box-sizing:border-box;border-radius:2px;"></div>
<div style="position:absolute;left:956.9px;top:23.1px;width:49.8px;height:39.0px;background:#525252;border:2px solid #a2a2a2;box-sizing:border-box;border-radius:2px;"></div>
<div style="position:absolute;left:28.7px;top:73.0px;width:41.5px;height:38.6px;background:#525252;border:2px solid #a2a2a2;box-sizing:border-box;border-radius:2px;"></div>
<div style="position:absolute;left:115.3px;top:73.0px;width:41.5px;height:38.6px;background:#525252;border:2px solid #a2a2a2;box-sizing:border-box;border-radius:2px;"></div>
<div style="position:absolute;left:158.7px;top:73.0px;width:41.5px;height:38.6px;background:#525252;border:2px solid #a2a2a2;box-sizing:border-box;border-radius:2px;"></div>
<div style="position:absolute;left:202.1px;top:73.0px;width:41.5px;height:38.6px;background:#525252;border:2px solid #a2a2a2;box-sizing:border-box;border-radius:2px;"></div>
<div style="position:absolute;left:245.5px;top:73.0px;width:41.5px;height:38.6px;background:#525252;border:2px solid #a2a2a2;box-sizing:border-box;border-radius:2px;"></div>
<div style="position:absolute;left:314.2px;top:73.0px;width:41.5px;height:38.6px;background:#525252;border:2px solid #a2a2a2;box-sizing:border-box;border-radius:2px;"></div>
<div style="position:absolute;left:357.7px;top:73.0px;width:41.5px;height:38.6px;background:#525252;border:2px solid #a2a2a2;box-sizing:border-box;border-radius:2px;"></div>
<div style="position:absolute;left:401.2px;top:73.0px;width:41.5px;height:38.6px;background:#525252;border:2px solid #a2a2a2;box-sizing:border-box;border-radius:2px;"></div>
<div style="position:absolute;left:444.7px;top:73.0px;width:41.5px;height:38.6px;background:#525252;border:2px solid #a2a2a2;box-sizing:border-box;border-radius:2px;"></div>
<div style="position:absolute;left:512.5px;top:73.0px;width:41.5px;height:38.6px;background:#525252;border:2px solid #a2a2a2;box-sizing:border-box;border-radius:2px;"></div>
<div style="position:absolute;left:556.0px;top:73.0px;width:41.5px;height:38.6px;background:#525252;border:2px solid #a2a2a2;box-sizing:border-box;border-radius:2px;"></div>
<div style="position:absolute;left:599.6px;top:73.0px;width:41.5px;height:38.6px;background:#525252;border:2px solid #a2a2a2;box-sizing:border-box;border-radius:2px;"></div>
<div style="position:absolute;left:643.2px;top:73.0px;width:41.5px;height:38.6px;background:#525252;border:2px solid #a2a2a2;box-sizing:border-box;border-radius:2px;"></div>
<div style="position:absolute;left:698.8px;top:73.0px;width:41.0px;height:38.6px;background:#525252;border:2px solid #a2a2a2;box-sizing:border-box;border-radius:2px;"></div>
<div style="position:absolute;left:742.5px;top:73.0px;width:41.0px;height:38.6px;background:#525252;border:2px solid #a2a2a2;box-sizing:border-box;border-radius:2px;"></div>
<div style="position:absolute;left:786.1px;top:73.0px;width:41.0px;height:38.6px;background:#525252;border:2px solid #a2a2a2;box-sizing:border-box;border-radius:2px;"></div>
<div style="position:absolute;left:28.7px;top:122.7px;width:41.2px;height:38.6px;background:#525252;border:2px solid #a2a2a2;box-sizing:border-box;border-radius:2px;"></div>
<div style="position:absolute;left:72.1px;top:122.7px;width:41.2px;height:38.6px;background:#525252;border:2px solid #a2a2a2;box-sizing:border-box;border-radius:2px;"></div>
<div style="position:absolute;left:115.5px;top:122.7px;width:41.2px;height:38.6px;background:#525252;border:2px solid #a2a2a2;box-sizing:border-box;border-radius:2px;"></div>
<div style="position:absolute;left:158.9px;top:122.7px;width:41.2px;height:38.6px;background:#525252;border:2px solid #a2a2a2;box-sizing:border-box;border-radius:2px;"></div>
<div style="position:absolute;left:202.3px;top:122.7px;width:41.2px;height:38.6px;background:#525252;border:2px solid #a2a2a2;box-sizing:border-box;border-radius:2px;"></div>
<div style="position:absolute;left:245.7px;top:122.7px;width:41.2px;height:38.6px;background:#525252;border:2px solid #a2a2a2;box-sizing:border-box;border-radius:2px;"></div>
<div style="position:absolute;left:289.1px;top:122.7px;width:41.2px;height:38.6px;background:#525252;border:2px solid #a2a2a2;box-sizing:border-box;border-radius:2px;"></div>
<div style="position:absolute;left:332.5px;top:122.7px;width:41.2px;height:38.6px;background:#525252;border:2px solid #a2a2a2;box-sizing:border-box;border-radius:2px;"></div>
<div style="position:absolute;left:375.9px;top:122.7px;width:41.2px;height:38.6px;background:#525252;border:2px solid #a2a2a2;box-sizing:border-box;border-radius:2px;"></div>
<div style="position:absolute;left:419.3px;top:122.7px;width:41.2px;height:38.6px;background:#525252;border:2px solid #a2a2a2;box-sizing:border-box;border-radius:2px;"></div>
<div style="position:absolute;left:462.7px;top:122.7px;width:41.2px;height:38.6px;background:#525252;border:2px solid #a2a2a2;box-sizing:border-box;border-radius:2px;"></div>
<div style="position:absolute;left:506.1px;top:122.7px;width:41.2px;height:38.6px;background:#525252;border:2px solid #a2a2a2;box-sizing:border-box;border-radius:2px;"></div>
<div style="position:absolute;left:549.5px;top:122.7px;width:41.2px;height:38.6px;background:#525252;border:2px solid #a2a2a2;box-sizing:border-box;border-radius:2px;"></div>
<div style="position:absolute;left:592.9px;top:122.7px;width:41.2px;height:38.6px;background:#525252;border:2px solid #a2a2a2;box-sizing:border-box;border-radius:2px;"></div>
<div style="position:absolute;left:637.2px;top:122.7px;width:47.0px;height:38.6px;background:#525252;border:2px solid #a2a2a2;box-sizing:border-box;border-radius:2px;"></div>
<div style="position:absolute;left:698.8px;top:122.7px;width:41.0px;height:38.6px;background:#525252;border:2px solid #a2a2a2;box-sizing:border-box;border-radius:2px;"></div>
<div style="position:absolute;left:742.5px;top:122.7px;width:41.0px;height:38.6px;background:#525252;border:2px solid #a2a2a2;box-sizing:border-box;border-radius:2px;"></div>
<div style="position:absolute;left:786.1px;top:122.7px;width:41.0px;height:38.6px;background:#525252;border:2px solid #a2a2a2;box-sizing:border-box;border-radius:2px;"></div>
<div style="position:absolute;left:841.6px;top:122.7px;width:40.8px;height:38.6px;background:#525252;border:2px solid #a2a2a2;box-sizing:border-box;border-radius:2px;"></div>
<div style="position:absolute;left:885.1px;top:122.7px;width:40.8px;height:38.6px;background:#525252;border:2px solid #a2a2a2;box-sizing:border-box;border-radius:2px;"></div>
<div style="position:absolute;left:928.7px;top:122.7px;width:40.8px;height:38.6px;background:#525252;border:2px solid #a2a2a2;box-sizing:border-box;border-radius:2px;"></div>
<div style="position:absolute;left:972.2px;top:122.7px;width:40.8px;height:38.6px;background:#525252;border:2px solid #a2a2a2;box-sizing:border-box;border-radius:2px;"></div>
<div style="position:absolute;left:28.7px;top:166.5px;width:66.0px;height:38.6px;background:#525252;border:2px solid #a2a2a2;box-sizing:border-box;border-radius:2px;"></div>
<div style="position:absolute;left:97.1px;top:166.5px;width:41.2px;height:38.6px;background:#525252;border:2px solid #a2a2a2;box-sizing:border-box;border-radius:2px;"></div>
<div style="position:absolute;left:140.5px;top:166.5px;width:41.2px;height:38.6px;background:#525252;border:2px solid #a2a2a2;box-sizing:border-box;border-radius:2px;"></div>
<div style="position:absolute;left:183.9px;top:166.5px;width:41.2px;height:38.6px;background:#525252;border:2px solid #a2a2a2;box-sizing:border-box;border-radius:2px;"></div>
<div style="position:absolute;left:227.3px;top:166.5px;width:41.2px;height:38.6px;background:#525252;border:2px solid #a2a2a2;box-sizing:border-box;border-radius:2px;"></div>
<div style="position:absolute;left:270.7px;top:166.5px;width:41.2px;height:38.6px;background:#525252;border:2px solid #a2a2a2;box-sizing:border-box;border-radius:2px;"></div>
<div style="position:absolute;left:314.1px;top:166.5px;width:41.2px;height:38.6px;background:#525252;border:2px solid #a2a2a2;box-sizing:border-box;border-radius:2px;"></div>
<div style="position:absolute;left:357.5px;top:166.5px;width:41.2px;height:38.6px;background:#525252;border:2px solid #a2a2a2;box-sizing:border-box;border-radius:2px;"></div>
<div style="position:absolute;left:400.9px;top:166.5px;width:41.2px;height:38.6px;background:#525252;border:2px solid #a2a2a2;box-sizing:border-box;border-radius:2px;"></div>
<div style="position:absolute;left:444.3px;top:166.5px;width:41.2px;height:38.6px;background:#525252;border:2px solid #a2a2a2;box-sizing:border-box;border-radius:2px;"></div>
<div style="position:absolute;left:487.7px;top:166.5px;width:41.2px;height:38.6px;background:#525252;border:2px solid #a2a2a2;box-sizing:border-box;border-radius:2px;"></div>
<div style="position:absolute;left:531.1px;top:166.5px;width:41.2px;height:38.6px;background:#525252;border:2px solid #a2a2a2;box-sizing:border-box;border-radius:2px;"></div>
<div style="position:absolute;left:574.5px;top:166.5px;width:41.2px;height:38.6px;background:#525252;border:2px solid #a2a2a2;box-sizing:border-box;border-radius:2px;"></div>
<div style="position:absolute;left:617.8px;top:166.5px;width:66.4px;height:38.6px;background:#525252;border:2px solid #a2a2a2;box-sizing:border-box;border-radius:2px;"></div>
<div style="position:absolute;left:698.8px;top:166.5px;width:41.0px;height:38.6px;background:#525252;border:2px solid #a2a2a2;box-sizing:border-box;border-radius:2px;"></div>
<div style="position:absolute;left:742.5px;top:166.5px;width:41.0px;height:38.6px;background:#525252;border:2px solid #a2a2a2;box-sizing:border-box;border-radius:2px;"></div>
<div style="position:absolute;left:786.1px;top:166.5px;width:41.0px;height:38.6px;background:#525252;border:2px solid #a2a2a2;box-sizing:border-box;border-radius:2px;"></div>
<div style="position:absolute;left:841.6px;top:166.5px;width:40.8px;height:38.6px;background:#525252;border:2px solid #a2a2a2;box-sizing:border-box;border-radius:2px;"></div>
<div style="position:absolute;left:885.1px;top:166.5px;width:40.8px;height:38.6px;background:#525252;border:2px solid #a2a2a2;box-sizing:border-box;border-radius:2px;"></div>
<div style="position:absolute;left:928.7px;top:166.5px;width:40.8px;height:38.6px;background:#525252;border:2px solid #a2a2a2;box-sizing:border-box;border-radius:2px;"></div>
<div style="position:absolute;left:972.2px;top:166.5px;width:40.8px;height:81.2px;background:#525252;border:2px solid #a2a2a2;box-sizing:border-box;border-radius:2px;"></div>
<div style="position:absolute;left:28.7px;top:209.9px;width:75.5px;height:38.6px;background:#525252;border:2px solid #a2a2a2;box-sizing:border-box;border-radius:2px;"></div>
<div style="position:absolute;left:107.0px;top:209.9px;width:41.2px;height:38.6px;background:#525252;border:2px solid #a2a2a2;box-sizing:border-box;border-radius:2px;"></div>
<div style="position:absolute;left:150.4px;top:209.9px;width:41.2px;height:38.6px;background:#525252;border:2px solid #a2a2a2;box-sizing:border-box;border-radius:2px;"></div>
<div style="position:absolute;left:193.8px;top:209.9px;width:41.2px;height:38.6px;background:#525252;border:2px solid #a2a2a2;box-sizing:border-box;border-radius:2px;"></div>
<div style="position:absolute;left:237.2px;top:209.9px;width:41.2px;height:38.6px;background:#525252;border:2px solid #a2a2a2;box-sizing:border-box;border-radius:2px;"></div>
<div style="position:absolute;left:280.6px;top:209.9px;width:41.2px;height:38.6px;background:#525252;border:2px solid #a2a2a2;box-sizing:border-box;border-radius:2px;"></div>
<div style="position:absolute;left:324.0px;top:209.9px;width:41.2px;height:38.6px;background:#525252;border:2px solid #a2a2a2;box-sizing:border-box;border-radius:2px;"></div>
<div style="position:absolute;left:367.4px;top:209.9px;width:41.2px;height:38.6px;background:#525252;border:2px solid #a2a2a2;box-sizing:border-box;border-radius:2px;"></div>
<div style="position:absolute;left:410.8px;top:209.9px;width:41.2px;height:38.6px;background:#525252;border:2px solid #a2a2a2;box-sizing:border-box;border-radius:2px;"></div>
<div style="position:absolute;left:454.2px;top:209.9px;width:41.2px;height:38.6px;background:#525252;border:2px solid #a2a2a2;box-sizing:border-box;border-radius:2px;"></div>
<div style="position:absolute;left:497.6px;top:209.9px;width:41.2px;height:38.6px;background:#525252;border:2px solid #a2a2a2;box-sizing:border-box;border-radius:2px;"></div>
<div style="position:absolute;left:541.0px;top:209.9px;width:41.2px;height:38.6px;background:#525252;border:2px solid #a2a2a2;box-sizing:border-box;border-radius:2px;"></div>
<div style="position:absolute;left:584.4px;top:209.9px;width:41.2px;height:38.6px;background:#525252;border:2px solid #a2a2a2;box-sizing:border-box;border-radius:2px;"></div>
<div style="position:absolute;left:628.3px;top:209.9px;width:56.0px;height:38.6px;background:#525252;border:2px solid #a2a2a2;box-sizing:border-box;border-radius:2px;"></div>
<div style="position:absolute;left:841.6px;top:209.9px;width:40.8px;height:38.6px;background:#525252;border:2px solid #a2a2a2;box-sizing:border-box;border-radius:2px;"></div>
<div style="position:absolute;left:885.1px;top:209.9px;width:40.8px;height:38.6px;background:#525252;border:2px solid #a2a2a2;box-sizing:border-box;border-radius:2px;"></div>
<div style="position:absolute;left:928.7px;top:209.9px;width:40.8px;height:38.6px;background:#525252;border:2px solid #a2a2a2;box-sizing:border-box;border-radius:2px;"></div>
<div style="position:absolute;left:28.7px;top:253.5px;width:49.7px;height:38.6px;background:#525252;border:2px solid #a2a2a2;box-sizing:border-box;border-radius:2px;"></div>
<div style="position:absolute;left:80.8px;top:253.5px;width:41.2px;height:38.6px;background:#525252;border:2px solid #a2a2a2;box-sizing:border-box;border-radius:2px;"></div>
<div style="position:absolute;left:124.2px;top:253.5px;width:41.2px;height:38.6px;background:#525252;border:2px solid #a2a2a2;box-sizing:border-box;border-radius:2px;"></div>
<div style="position:absolute;left:167.6px;top:253.5px;width:41.2px;height:38.6px;background:#525252;border:2px solid #a2a2a2;box-sizing:border-box;border-radius:2px;"></div>
<div style="position:absolute;left:211.0px;top:253.5px;width:41.2px;height:38.6px;background:#525252;border:2px solid #a2a2a2;box-sizing:border-box;border-radius:2px;"></div>
<div style="position:absolute;left:254.4px;top:253.5px;width:41.2px;height:38.6px;background:#525252;border:2px solid #a2a2a2;box-sizing:border-box;border-radius:2px;"></div>
<div style="position:absolute;left:297.8px;top:253.5px;width:41.2px;height:38.6px;background:#525252;border:2px solid #a2a2a2;box-sizing:border-box;border-radius:2px;"></div>
<div style="position:absolute;left:341.2px;top:253.5px;width:41.2px;height:38.6px;background:#525252;border:2px solid #a2a2a2;box-sizing:border-box;border-radius:2px;"></div>
<div style="position:absolute;left:384.6px;top:253.5px;width:41.2px;height:38.6px;background:#525252;border:2px solid #a2a2a2;box-sizing:border-box;border-radius:2px;"></div>
<div style="position:absolute;left:428.0px;top:253.5px;width:41.2px;height:38.6px;background:#525252;border:2px solid #a2a2a2;box-sizing:border-box;border-radius:2px;"></div>
<div style="position:absolute;left:471.4px;top:253.5px;width:41.2px;height:38.6px;background:#525252;border:2px solid #a2a2a2;box-sizing:border-box;border-radius:2px;"></div>
<div style="position:absolute;left:514.8px;top:253.5px;width:41.2px;height:38.6px;background:#525252;border:2px solid #a2a2a2;box-sizing:border-box;border-radius:2px;"></div>
<div style="position:absolute;left:558.2px;top:253.5px;width:41.2px;height:38.6px;background:#525252;border:2px solid #a2a2a2;box-sizing:border-box;border-radius:2px;"></div>
<div style="position:absolute;left:602.3px;top:253.5px;width:82.0px;height:38.6px;background:#525252;border:2px solid #a2a2a2;box-sizing:border-box;border-radius:2px;"></div>
<div style="position:absolute;left:742.4px;top:253.5px;width:41.0px;height:38.6px;background:#525252;border:2px solid #a2a2a2;box-sizing:border-box;border-radius:2px;"></div>
<div style="position:absolute;left:841.6px;top:253.5px;width:40.8px;height:38.6px;background:#525252;border:2px solid #a2a2a2;box-sizing:border-box;border-radius:2px;"></div>
<div style="position:absolute;left:885.1px;top:253.5px;width:40.8px;height:38.6px;background:#525252;border:2px solid #a2a2a2;box-sizing:border-box;border-radius:2px;"></div>
<div style="position:absolute;left:928.7px;top:253.5px;width:40.8px;height:38.6px;background:#525252;border:2px solid #a2a2a2;box-sizing:border-box;border-radius:2px;"></div>
<div style="position:absolute;left:972.2px;top:253.5px;width:40.8px;height:60.0px;background:#525252;border:2px solid #a2a2a2;box-sizing:border-box;border-radius:2px;"></div>
<div style="position:absolute;left:28.7px;top:296.8px;width:44.3px;height:38.6px;background:#525252;border:2px solid #a2a2a2;box-sizing:border-box;border-radius:2px;"></div>
<div style="position:absolute;left:76.4px;top:296.8px;width:44.1px;height:38.6px;background:#525252;border:2px solid #a2a2a2;box-sizing:border-box;border-radius:2px;"></div>
<div style="position:absolute;left:123.4px;top:296.8px;width:43.9px;height:38.6px;background:#525252;border:2px solid #a2a2a2;box-sizing:border-box;border-radius:2px;"></div>
<div style="position:absolute;left:170.7px;top:296.8px;width:43.8px;height:38.6px;background:#525252;border:2px solid #a2a2a2;box-sizing:border-box;border-radius:2px;"></div>
<div style="position:absolute;left:218.0px;top:296.8px;width:182.7px;height:38.6px;background:#525252;border:2px solid #a2a2a2;box-sizing:border-box;border-radius:2px;"></div>
<div style="position:absolute;left:403.2px;top:296.8px;width:44.8px;height:38.6px;background:#525252;border:2px solid #a2a2a2;box-sizing:border-box;border-radius:2px;"></div>
<div style="position:absolute;left:451.7px;top:296.8px;width:43.3px;height:38.6px;background:#525252;border:2px solid #a2a2a2;box-sizing:border-box;border-radius:2px;"></div>
<div style="position:absolute;left:498.7px;top:296.8px;width:43.3px;height:38.6px;background:#525252;border:2px solid #a2a2a2;box-sizing:border-box;border-radius:2px;"></div>
<div style="position:absolute;left:545.7px;top:296.8px;width:43.3px;height:38.6px;background:#525252;border:2px solid #a2a2a2;box-sizing:border-box;border-radius:2px;"></div>
<div style="position:absolute;left:592.7px;top:296.8px;width:43.3px;height:38.6px;background:#525252;border:2px solid #a2a2a2;box-sizing:border-box;border-radius:2px;"></div>
<div style="position:absolute;left:639.7px;top:296.8px;width:44.5px;height:38.6px;background:#525252;border:2px solid #a2a2a2;box-sizing:border-box;border-radius:2px;"></div>
<div style="position:absolute;left:698.8px;top:296.8px;width:40.7px;height:38.6px;background:#525252;border:2px solid #a2a2a2;box-sizing:border-box;border-radius:2px;"></div>
<div style="position:absolute;left:742.6px;top:296.8px;width:40.7px;height:38.6px;background:#525252;border:2px solid #a2a2a2;box-sizing:border-box;border-radius:2px;"></div>
<div style="position:absolute;left:786.2px;top:296.8px;width:40.8px;height:38.6px;background:#525252;border:2px solid #a2a2a2;box-sizing:border-box;border-radius:2px;"></div>
<div style="position:absolute;left:841.6px;top:296.8px;width:40.6px;height:38.6px;background:#525252;border:2px solid #a2a2a2;box-sizing:border-box;border-radius:2px;"></div>
<div style="position:absolute;left:885.6px;top:296.8px;width:84.0px;height:38.6px;background:#525252;border:2px solid #a2a2a2;box-sizing:border-box;border-radius:2px;"></div>
</div>
<div id="t66" style="position:absolute;left:827.5px;transform-origin:0 0;top:1001.0px;font-size:12.8px;line-height:1;font-weight:400;color:#c9c9c9;white-space:nowrap;transform:translateX(-50%) scaleX(0.8600);transform-origin:50% 0;-webkit-text-stroke:0.46px #c9c9c9;letter-spacing:-0.2px;">Esc</div>
<div id="t67" style="position:absolute;left:914.0px;transform-origin:0 0;top:1001.0px;font-size:12.8px;line-height:1;font-weight:400;color:#c9c9c9;white-space:nowrap;transform:translateX(-50%) scaleX(0.8600);transform-origin:50% 0;-webkit-text-stroke:0.46px #c9c9c9;letter-spacing:-0.2px;">F1</div>
<div id="t68" style="position:absolute;left:957.4px;transform-origin:0 0;top:1001.0px;font-size:12.8px;line-height:1;font-weight:400;color:#c9c9c9;white-space:nowrap;transform:translateX(-50%) scaleX(0.8600);transform-origin:50% 0;-webkit-text-stroke:0.46px #c9c9c9;letter-spacing:-0.2px;">F2</div>
<div id="t69" style="position:absolute;left:1000.8px;transform-origin:0 0;top:1001.0px;font-size:12.8px;line-height:1;font-weight:400;color:#c9c9c9;white-space:nowrap;transform:translateX(-50%) scaleX(0.8600);transform-origin:50% 0;-webkit-text-stroke:0.46px #c9c9c9;letter-spacing:-0.2px;">F3</div>
<div id="t70" style="position:absolute;left:1044.2px;transform-origin:0 0;top:1001.0px;font-size:12.8px;line-height:1;font-weight:400;color:#c9c9c9;white-space:nowrap;transform:translateX(-50%) scaleX(0.8600);transform-origin:50% 0;-webkit-text-stroke:0.46px #c9c9c9;letter-spacing:-0.2px;">F4</div>
<div id="t71" style="position:absolute;left:1113.0px;transform-origin:0 0;top:1001.0px;font-size:12.8px;line-height:1;font-weight:400;color:#c9c9c9;white-space:nowrap;transform:translateX(-50%) scaleX(0.8600);transform-origin:50% 0;-webkit-text-stroke:0.46px #c9c9c9;letter-spacing:-0.2px;">F5</div>
<div id="t72" style="position:absolute;left:1156.5px;transform-origin:0 0;top:1001.0px;font-size:12.8px;line-height:1;font-weight:400;color:#c9c9c9;white-space:nowrap;transform:translateX(-50%) scaleX(0.8600);transform-origin:50% 0;-webkit-text-stroke:0.46px #c9c9c9;letter-spacing:-0.2px;">F6</div>
<div id="t73" style="position:absolute;left:1200.0px;transform-origin:0 0;top:1001.0px;font-size:12.8px;line-height:1;font-weight:400;color:#c9c9c9;white-space:nowrap;transform:translateX(-50%) scaleX(0.8600);transform-origin:50% 0;-webkit-text-stroke:0.46px #c9c9c9;letter-spacing:-0.2px;">F7</div>
<div id="t74" style="position:absolute;left:1243.5px;transform-origin:0 0;top:1001.0px;font-size:12.8px;line-height:1;font-weight:400;color:#c9c9c9;white-space:nowrap;transform:translateX(-50%) scaleX(0.8600);transform-origin:50% 0;-webkit-text-stroke:0.46px #c9c9c9;letter-spacing:-0.2px;">F8</div>
<div id="t75" style="position:absolute;left:1311.2px;transform-origin:0 0;top:1001.0px;font-size:12.8px;line-height:1;font-weight:400;color:#c9c9c9;white-space:nowrap;transform:translateX(-50%) scaleX(0.8600);transform-origin:50% 0;-webkit-text-stroke:0.46px #c9c9c9;letter-spacing:-0.2px;">F9</div>
<div id="t76" style="position:absolute;left:1354.8px;transform-origin:0 0;top:1001.0px;font-size:12.8px;line-height:1;font-weight:400;color:#c9c9c9;white-space:nowrap;transform:translateX(-50%) scaleX(0.8600);transform-origin:50% 0;-webkit-text-stroke:0.46px #c9c9c9;letter-spacing:-0.2px;">F10</div>
<div id="t77" style="position:absolute;left:1398.3px;transform-origin:0 0;top:1001.0px;font-size:12.8px;line-height:1;font-weight:400;color:#c9c9c9;white-space:nowrap;transform:translateX(-50%) scaleX(0.8600);transform-origin:50% 0;-webkit-text-stroke:0.46px #c9c9c9;letter-spacing:-0.2px;">F11</div>
<div id="t78" style="position:absolute;left:1441.9px;transform-origin:0 0;top:1001.0px;font-size:12.8px;line-height:1;font-weight:400;color:#c9c9c9;white-space:nowrap;transform:translateX(-50%) scaleX(0.8600);transform-origin:50% 0;-webkit-text-stroke:0.46px #c9c9c9;letter-spacing:-0.2px;">F12</div>
<div id="t79" style="position:absolute;left:1497.3px;transform-origin:0 0;top:1001.0px;font-size:12.8px;line-height:1;font-weight:400;color:#c9c9c9;white-space:nowrap;transform:translateX(-50%) scaleX(0.8600);transform-origin:50% 0;-webkit-text-stroke:0.46px #c9c9c9;letter-spacing:-0.2px;">Print</div>
<div id="t80" style="position:absolute;left:1541.0px;transform-origin:0 0;top:1001.0px;font-size:12.8px;line-height:1;font-weight:400;color:#c9c9c9;white-space:nowrap;transform:translateX(-50%) scaleX(0.8600);transform-origin:50% 0;-webkit-text-stroke:0.46px #c9c9c9;letter-spacing:-0.2px;">Scroll</div>
<div id="t81" style="position:absolute;left:1584.6px;transform-origin:0 0;top:1001.0px;font-size:12.8px;line-height:1;font-weight:400;color:#c9c9c9;white-space:nowrap;transform:translateX(-50%) scaleX(0.8600);transform-origin:50% 0;-webkit-text-stroke:0.46px #c9c9c9;letter-spacing:-0.2px;">Pause</div>
<div id="t82" style="position:absolute;left:827.3px;transform-origin:0 0;top:1050.7px;font-size:12.8px;line-height:1;font-weight:400;color:#c9c9c9;white-space:nowrap;transform:translateX(-50%) scaleX(0.8600);transform-origin:50% 0;-webkit-text-stroke:0.46px #c9c9c9;letter-spacing:-0.2px;">~</div>
<div id="t83" style="position:absolute;left:870.7px;transform-origin:0 0;top:1050.7px;font-size:12.8px;line-height:1;font-weight:400;color:#c9c9c9;white-space:nowrap;transform:translateX(-50%) scaleX(0.8600);transform-origin:50% 0;-webkit-text-stroke:0.46px #c9c9c9;letter-spacing:-0.2px;">1</div>
<div id="t84" style="position:absolute;left:914.1px;transform-origin:0 0;top:1050.7px;font-size:12.8px;line-height:1;font-weight:400;color:#c9c9c9;white-space:nowrap;transform:translateX(-50%) scaleX(0.8600);transform-origin:50% 0;-webkit-text-stroke:0.46px #c9c9c9;letter-spacing:-0.2px;">2</div>
<div id="t85" style="position:absolute;left:957.5px;transform-origin:0 0;top:1050.7px;font-size:12.8px;line-height:1;font-weight:400;color:#c9c9c9;white-space:nowrap;transform:translateX(-50%) scaleX(0.8600);transform-origin:50% 0;-webkit-text-stroke:0.46px #c9c9c9;letter-spacing:-0.2px;">3</div>
<div id="t86" style="position:absolute;left:1000.9px;transform-origin:0 0;top:1050.7px;font-size:12.8px;line-height:1;font-weight:400;color:#c9c9c9;white-space:nowrap;transform:translateX(-50%) scaleX(0.8600);transform-origin:50% 0;-webkit-text-stroke:0.46px #c9c9c9;letter-spacing:-0.2px;">4</div>
<div id="t87" style="position:absolute;left:1044.3px;transform-origin:0 0;top:1050.7px;font-size:12.8px;line-height:1;font-weight:400;color:#c9c9c9;white-space:nowrap;transform:translateX(-50%) scaleX(0.8600);transform-origin:50% 0;-webkit-text-stroke:0.46px #c9c9c9;letter-spacing:-0.2px;">5</div>
<div id="t88" style="position:absolute;left:1087.7px;transform-origin:0 0;top:1050.7px;font-size:12.8px;line-height:1;font-weight:400;color:#c9c9c9;white-space:nowrap;transform:translateX(-50%) scaleX(0.8600);transform-origin:50% 0;-webkit-text-stroke:0.46px #c9c9c9;letter-spacing:-0.2px;">6</div>
<div id="t89" style="position:absolute;left:1131.1px;transform-origin:0 0;top:1050.7px;font-size:12.8px;line-height:1;font-weight:400;color:#c9c9c9;white-space:nowrap;transform:translateX(-50%) scaleX(0.8600);transform-origin:50% 0;-webkit-text-stroke:0.46px #c9c9c9;letter-spacing:-0.2px;">7</div>
<div id="t90" style="position:absolute;left:1174.5px;transform-origin:0 0;top:1050.7px;font-size:12.8px;line-height:1;font-weight:400;color:#c9c9c9;white-space:nowrap;transform:translateX(-50%) scaleX(0.8600);transform-origin:50% 0;-webkit-text-stroke:0.46px #c9c9c9;letter-spacing:-0.2px;">8</div>
<div id="t91" style="position:absolute;left:1217.9px;transform-origin:0 0;top:1050.7px;font-size:12.8px;line-height:1;font-weight:400;color:#c9c9c9;white-space:nowrap;transform:translateX(-50%) scaleX(0.8600);transform-origin:50% 0;-webkit-text-stroke:0.46px #c9c9c9;letter-spacing:-0.2px;">9</div>
<div id="t92" style="position:absolute;left:1261.3px;transform-origin:0 0;top:1050.7px;font-size:12.8px;line-height:1;font-weight:400;color:#c9c9c9;white-space:nowrap;transform:translateX(-50%) scaleX(0.8600);transform-origin:50% 0;-webkit-text-stroke:0.46px #c9c9c9;letter-spacing:-0.2px;">0</div>
<div id="t93" style="position:absolute;left:1304.7px;transform-origin:0 0;top:1050.7px;font-size:12.8px;line-height:1;font-weight:400;color:#c9c9c9;white-space:nowrap;transform:translateX(-50%) scaleX(0.8600);transform-origin:50% 0;-webkit-text-stroke:0.46px #c9c9c9;letter-spacing:-0.2px;">-</div>
<div id="t94" style="position:absolute;left:1348.1px;transform-origin:0 0;top:1050.7px;font-size:12.8px;line-height:1;font-weight:400;color:#c9c9c9;white-space:nowrap;transform:translateX(-50%) scaleX(0.8600);transform-origin:50% 0;-webkit-text-stroke:0.46px #c9c9c9;letter-spacing:-0.2px;">=</div>
<div id="t95" style="position:absolute;left:1391.5px;transform-origin:0 0;top:1050.7px;font-size:12.8px;line-height:1;font-weight:400;color:#c9c9c9;white-space:nowrap;transform:translateX(-50%) scaleX(0.8600);transform-origin:50% 0;-webkit-text-stroke:0.46px #c9c9c9;letter-spacing:-0.2px;">K14</div>
<div id="t96" style="position:absolute;left:1438.7px;transform-origin:0 0;top:1050.7px;font-size:12.8px;line-height:1;font-weight:400;color:#c9c9c9;white-space:nowrap;transform:translateX(-50%) scaleX(0.8600);transform-origin:50% 0;-webkit-text-stroke:0.46px #c9c9c9;letter-spacing:-0.2px;">Back</div>
<div id="t97" style="position:absolute;left:1497.3px;transform-origin:0 0;top:1050.7px;font-size:12.8px;line-height:1;font-weight:400;color:#c9c9c9;white-space:nowrap;transform:translateX(-50%) scaleX(0.8600);transform-origin:50% 0;-webkit-text-stroke:0.46px #c9c9c9;letter-spacing:-0.2px;">Ins</div>
<div id="t98" style="position:absolute;left:1541.0px;transform-origin:0 0;top:1050.7px;font-size:12.8px;line-height:1;font-weight:400;color:#c9c9c9;white-space:nowrap;transform:translateX(-50%) scaleX(0.8600);transform-origin:50% 0;-webkit-text-stroke:0.46px #c9c9c9;letter-spacing:-0.2px;">Home</div>
<div id="t99" style="position:absolute;left:1584.6px;transform-origin:0 0;top:1050.7px;font-size:12.8px;line-height:1;font-weight:400;color:#c9c9c9;white-space:nowrap;transform:translateX(-50%) scaleX(0.8600);transform-origin:50% 0;-webkit-text-stroke:0.46px #c9c9c9;letter-spacing:-0.2px;">PgUp</div>
<div id="t100" style="position:absolute;left:1640.0px;transform-origin:0 0;top:1050.7px;font-size:12.8px;line-height:1;font-weight:400;color:#c9c9c9;white-space:nowrap;transform:translateX(-50%) scaleX(0.8600);transform-origin:50% 0;-webkit-text-stroke:0.46px #c9c9c9;letter-spacing:-0.2px;">NumL</div>
<div id="t101" style="position:absolute;left:1683.5px;transform-origin:0 0;top:1050.7px;font-size:12.8px;line-height:1;font-weight:400;color:#c9c9c9;white-space:nowrap;transform:translateX(-50%) scaleX(0.8600);transform-origin:50% 0;-webkit-text-stroke:0.46px #c9c9c9;letter-spacing:-0.2px;">//</div>
<div id="t102" style="position:absolute;left:1727.1px;transform-origin:0 0;top:1050.7px;font-size:12.8px;line-height:1;font-weight:400;color:#c9c9c9;white-space:nowrap;transform:translateX(-50%) scaleX(0.8600);transform-origin:50% 0;-webkit-text-stroke:0.46px #c9c9c9;letter-spacing:-0.2px;">*</div>
<div id="t103" style="position:absolute;left:1770.7px;transform-origin:0 0;top:1050.7px;font-size:12.8px;line-height:1;font-weight:400;color:#c9c9c9;white-space:nowrap;transform:translateX(-50%) scaleX(0.8600);transform-origin:50% 0;-webkit-text-stroke:0.46px #c9c9c9;letter-spacing:-0.2px;">-</div>
<div id="t104" style="position:absolute;left:839.7px;transform-origin:0 0;top:1094.5px;font-size:12.8px;line-height:1;font-weight:400;color:#c9c9c9;white-space:nowrap;transform:translateX(-50%) scaleX(0.8600);transform-origin:50% 0;-webkit-text-stroke:0.46px #c9c9c9;letter-spacing:-0.2px;">Tab</div>
<div id="t105" style="position:absolute;left:895.7px;transform-origin:0 0;top:1094.5px;font-size:12.8px;line-height:1;font-weight:400;color:#c9c9c9;white-space:nowrap;transform:translateX(-50%) scaleX(0.8600);transform-origin:50% 0;-webkit-text-stroke:0.46px #c9c9c9;letter-spacing:-0.2px;">Q</div>
<div id="t106" style="position:absolute;left:939.1px;transform-origin:0 0;top:1094.5px;font-size:12.8px;line-height:1;font-weight:400;color:#c9c9c9;white-space:nowrap;transform:translateX(-50%) scaleX(0.8600);transform-origin:50% 0;-webkit-text-stroke:0.46px #c9c9c9;letter-spacing:-0.2px;">W</div>
<div id="t107" style="position:absolute;left:982.5px;transform-origin:0 0;top:1094.5px;font-size:12.8px;line-height:1;font-weight:400;color:#c9c9c9;white-space:nowrap;transform:translateX(-50%) scaleX(0.8600);transform-origin:50% 0;-webkit-text-stroke:0.46px #c9c9c9;letter-spacing:-0.2px;">E</div>
<div id="t108" style="position:absolute;left:1025.9px;transform-origin:0 0;top:1094.5px;font-size:12.8px;line-height:1;font-weight:400;color:#c9c9c9;white-space:nowrap;transform:translateX(-50%) scaleX(0.8600);transform-origin:50% 0;-webkit-text-stroke:0.46px #c9c9c9;letter-spacing:-0.2px;">R</div>
<div id="t109" style="position:absolute;left:1069.3px;transform-origin:0 0;top:1094.5px;font-size:12.8px;line-height:1;font-weight:400;color:#c9c9c9;white-space:nowrap;transform:translateX(-50%) scaleX(0.8600);transform-origin:50% 0;-webkit-text-stroke:0.46px #c9c9c9;letter-spacing:-0.2px;">T</div>
<div id="t110" style="position:absolute;left:1112.7px;transform-origin:0 0;top:1094.5px;font-size:12.8px;line-height:1;font-weight:400;color:#c9c9c9;white-space:nowrap;transform:translateX(-50%) scaleX(0.8600);transform-origin:50% 0;-webkit-text-stroke:0.46px #c9c9c9;letter-spacing:-0.2px;">Y</div>
<div id="t111" style="position:absolute;left:1156.1px;transform-origin:0 0;top:1094.5px;font-size:12.8px;line-height:1;font-weight:400;color:#c9c9c9;white-space:nowrap;transform:translateX(-50%) scaleX(0.8600);transform-origin:50% 0;-webkit-text-stroke:0.46px #c9c9c9;letter-spacing:-0.2px;">U</div>
<div id="t112" style="position:absolute;left:1199.5px;transform-origin:0 0;top:1094.5px;font-size:12.8px;line-height:1;font-weight:400;color:#c9c9c9;white-space:nowrap;transform:translateX(-50%) scaleX(0.8600);transform-origin:50% 0;-webkit-text-stroke:0.46px #c9c9c9;letter-spacing:-0.2px;">I</div>
<div id="t113" style="position:absolute;left:1242.9px;transform-origin:0 0;top:1094.5px;font-size:12.8px;line-height:1;font-weight:400;color:#c9c9c9;white-space:nowrap;transform:translateX(-50%) scaleX(0.8600);transform-origin:50% 0;-webkit-text-stroke:0.46px #c9c9c9;letter-spacing:-0.2px;">O</div>
<div id="t114" style="position:absolute;left:1286.3px;transform-origin:0 0;top:1094.5px;font-size:12.8px;line-height:1;font-weight:400;color:#c9c9c9;white-space:nowrap;transform:translateX(-50%) scaleX(0.8600);transform-origin:50% 0;-webkit-text-stroke:0.46px #c9c9c9;letter-spacing:-0.2px;">P</div>
<div id="t115" style="position:absolute;left:1329.7px;transform-origin:0 0;top:1094.5px;font-size:12.8px;line-height:1;font-weight:400;color:#c9c9c9;white-space:nowrap;transform:translateX(-50%) scaleX(0.8600);transform-origin:50% 0;-webkit-text-stroke:0.46px #c9c9c9;letter-spacing:-0.2px;">[</div>
<div id="t116" style="position:absolute;left:1373.1px;transform-origin:0 0;top:1094.5px;font-size:12.8px;line-height:1;font-weight:400;color:#c9c9c9;white-space:nowrap;transform:translateX(-50%) scaleX(0.8600);transform-origin:50% 0;-webkit-text-stroke:0.46px #c9c9c9;letter-spacing:-0.2px;">]</div>
<div id="t117" style="position:absolute;left:1429.0px;transform-origin:0 0;top:1094.5px;font-size:12.8px;line-height:1;font-weight:400;color:#c9c9c9;white-space:nowrap;transform:translateX(-50%) scaleX(0.8600);transform-origin:50% 0;-webkit-text-stroke:0.46px #c9c9c9;letter-spacing:-0.2px;">| |</div>
<div id="t118" style="position:absolute;left:1497.3px;transform-origin:0 0;top:1094.5px;font-size:12.8px;line-height:1;font-weight:400;color:#c9c9c9;white-space:nowrap;transform:translateX(-50%) scaleX(0.8600);transform-origin:50% 0;-webkit-text-stroke:0.46px #c9c9c9;letter-spacing:-0.2px;">Del</div>
<div id="t119" style="position:absolute;left:1541.0px;transform-origin:0 0;top:1094.5px;font-size:12.8px;line-height:1;font-weight:400;color:#c9c9c9;white-space:nowrap;transform:translateX(-50%) scaleX(0.8600);transform-origin:50% 0;-webkit-text-stroke:0.46px #c9c9c9;letter-spacing:-0.2px;">End</div>
<div id="t120" style="position:absolute;left:1584.6px;transform-origin:0 0;top:1094.5px;font-size:12.8px;line-height:1;font-weight:400;color:#c9c9c9;white-space:nowrap;transform:translateX(-50%) scaleX(0.8600);transform-origin:50% 0;-webkit-text-stroke:0.46px #c9c9c9;letter-spacing:-0.2px;">PgDn</div>
<div id="t121" style="position:absolute;left:1640.0px;transform-origin:0 0;top:1094.5px;font-size:12.8px;line-height:1;font-weight:400;color:#c9c9c9;white-space:nowrap;transform:translateX(-50%) scaleX(0.8600);transform-origin:50% 0;-webkit-text-stroke:0.46px #c9c9c9;letter-spacing:-0.2px;">7</div>
<div id="t122" style="position:absolute;left:1683.5px;transform-origin:0 0;top:1094.5px;font-size:12.8px;line-height:1;font-weight:400;color:#c9c9c9;white-space:nowrap;transform:translateX(-50%) scaleX(0.8600);transform-origin:50% 0;-webkit-text-stroke:0.46px #c9c9c9;letter-spacing:-0.2px;">8</div>
<div id="t123" style="position:absolute;left:1727.1px;transform-origin:0 0;top:1094.5px;font-size:12.8px;line-height:1;font-weight:400;color:#c9c9c9;white-space:nowrap;transform:translateX(-50%) scaleX(0.8600);transform-origin:50% 0;-webkit-text-stroke:0.46px #c9c9c9;letter-spacing:-0.2px;">9</div>
<div id="t124" style="position:absolute;left:1770.6px;transform-origin:0 0;top:1115.8px;font-size:12.8px;line-height:1;font-weight:400;color:#c9c9c9;white-space:nowrap;transform:translateX(-50%) scaleX(0.8600);transform-origin:50% 0;-webkit-text-stroke:0.46px #c9c9c9;letter-spacing:-0.2px;">+</div>
<div id="t125" style="position:absolute;left:844.5px;transform-origin:0 0;top:1137.9px;font-size:12.8px;line-height:1;font-weight:400;color:#c9c9c9;white-space:nowrap;transform:translateX(-50%) scaleX(0.8600);transform-origin:50% 0;-webkit-text-stroke:0.46px #c9c9c9;letter-spacing:-0.2px;">Caps</div>
<div id="t126" style="position:absolute;left:905.6px;transform-origin:0 0;top:1137.9px;font-size:12.8px;line-height:1;font-weight:400;color:#c9c9c9;white-space:nowrap;transform:translateX(-50%) scaleX(0.8600);transform-origin:50% 0;-webkit-text-stroke:0.46px #c9c9c9;letter-spacing:-0.2px;">A</div>
<div id="t127" style="position:absolute;left:949.0px;transform-origin:0 0;top:1137.9px;font-size:12.8px;line-height:1;font-weight:400;color:#c9c9c9;white-space:nowrap;transform:translateX(-50%) scaleX(0.8600);transform-origin:50% 0;-webkit-text-stroke:0.46px #c9c9c9;letter-spacing:-0.2px;">S</div>
<div id="t128" style="position:absolute;left:992.4px;transform-origin:0 0;top:1137.9px;font-size:12.8px;line-height:1;font-weight:400;color:#c9c9c9;white-space:nowrap;transform:translateX(-50%) scaleX(0.8600);transform-origin:50% 0;-webkit-text-stroke:0.46px #c9c9c9;letter-spacing:-0.2px;">D</div>
<div id="t129" style="position:absolute;left:1035.8px;transform-origin:0 0;top:1137.9px;font-size:12.8px;line-height:1;font-weight:400;color:#c9c9c9;white-space:nowrap;transform:translateX(-50%) scaleX(0.8600);transform-origin:50% 0;-webkit-text-stroke:0.46px #c9c9c9;letter-spacing:-0.2px;">F</div>
<div id="t130" style="position:absolute;left:1079.2px;transform-origin:0 0;top:1137.9px;font-size:12.8px;line-height:1;font-weight:400;color:#c9c9c9;white-space:nowrap;transform:translateX(-50%) scaleX(0.8600);transform-origin:50% 0;-webkit-text-stroke:0.46px #c9c9c9;letter-spacing:-0.2px;">G</div>
<div id="t131" style="position:absolute;left:1122.6px;transform-origin:0 0;top:1137.9px;font-size:12.8px;line-height:1;font-weight:400;color:#c9c9c9;white-space:nowrap;transform:translateX(-50%) scaleX(0.8600);transform-origin:50% 0;-webkit-text-stroke:0.46px #c9c9c9;letter-spacing:-0.2px;">H</div>
<div id="t132" style="position:absolute;left:1166.0px;transform-origin:0 0;top:1137.9px;font-size:12.8px;line-height:1;font-weight:400;color:#c9c9c9;white-space:nowrap;transform:translateX(-50%) scaleX(0.8600);transform-origin:50% 0;-webkit-text-stroke:0.46px #c9c9c9;letter-spacing:-0.2px;">J</div>
<div id="t133" style="position:absolute;left:1209.4px;transform-origin:0 0;top:1137.9px;font-size:12.8px;line-height:1;font-weight:400;color:#c9c9c9;white-space:nowrap;transform:translateX(-50%) scaleX(0.8600);transform-origin:50% 0;-webkit-text-stroke:0.46px #c9c9c9;letter-spacing:-0.2px;">K</div>
<div id="t134" style="position:absolute;left:1252.8px;transform-origin:0 0;top:1137.9px;font-size:12.8px;line-height:1;font-weight:400;color:#c9c9c9;white-space:nowrap;transform:translateX(-50%) scaleX(0.8600);transform-origin:50% 0;-webkit-text-stroke:0.46px #c9c9c9;letter-spacing:-0.2px;">L</div>
<div id="t135" style="position:absolute;left:1296.2px;transform-origin:0 0;top:1137.9px;font-size:12.8px;line-height:1;font-weight:400;color:#c9c9c9;white-space:nowrap;transform:translateX(-50%) scaleX(0.8600);transform-origin:50% 0;-webkit-text-stroke:0.46px #c9c9c9;letter-spacing:-0.2px;">;</div>
<div id="t136" style="position:absolute;left:1339.6px;transform-origin:0 0;top:1137.9px;font-size:12.8px;line-height:1;font-weight:400;color:#c9c9c9;white-space:nowrap;transform:translateX(-50%) scaleX(0.8600);transform-origin:50% 0;-webkit-text-stroke:0.46px #c9c9c9;letter-spacing:-0.2px;">'</div>
<div id="t137" style="position:absolute;left:1383.0px;transform-origin:0 0;top:1137.9px;font-size:12.8px;line-height:1;font-weight:400;color:#c9c9c9;white-space:nowrap;transform:translateX(-50%) scaleX(0.8600);transform-origin:50% 0;-webkit-text-stroke:0.46px #c9c9c9;letter-spacing:-0.2px;">k42</div>
<div id="t138" style="position:absolute;left:1434.3px;transform-origin:0 0;top:1137.9px;font-size:12.8px;line-height:1;font-weight:400;color:#c9c9c9;white-space:nowrap;transform:translateX(-50%) scaleX(0.8600);transform-origin:50% 0;-webkit-text-stroke:0.46px #c9c9c9;letter-spacing:-0.2px;">Enter</div>
<div id="t139" style="position:absolute;left:1640.0px;transform-origin:0 0;top:1137.9px;font-size:12.8px;line-height:1;font-weight:400;color:#c9c9c9;white-space:nowrap;transform:translateX(-50%) scaleX(0.8600);transform-origin:50% 0;-webkit-text-stroke:0.46px #c9c9c9;letter-spacing:-0.2px;">4</div>
<div id="t140" style="position:absolute;left:1683.5px;transform-origin:0 0;top:1137.9px;font-size:12.8px;line-height:1;font-weight:400;color:#c9c9c9;white-space:nowrap;transform:translateX(-50%) scaleX(0.8600);transform-origin:50% 0;-webkit-text-stroke:0.46px #c9c9c9;letter-spacing:-0.2px;">5</div>
<div id="t141" style="position:absolute;left:1727.1px;transform-origin:0 0;top:1137.9px;font-size:12.8px;line-height:1;font-weight:400;color:#c9c9c9;white-space:nowrap;transform:translateX(-50%) scaleX(0.8600);transform-origin:50% 0;-webkit-text-stroke:0.46px #c9c9c9;letter-spacing:-0.2px;">6</div>
<div id="t142" style="position:absolute;left:831.6px;transform-origin:0 0;top:1181.5px;font-size:12.8px;line-height:1;font-weight:400;color:#c9c9c9;white-space:nowrap;transform:translateX(-50%) scaleX(0.8600);transform-origin:50% 0;-webkit-text-stroke:0.46px #c9c9c9;letter-spacing:-0.2px;">Shift</div>
<div id="t143" style="position:absolute;left:879.4px;transform-origin:0 0;top:1181.5px;font-size:12.8px;line-height:1;font-weight:400;color:#c9c9c9;white-space:nowrap;transform:translateX(-50%) scaleX(0.8600);transform-origin:50% 0;-webkit-text-stroke:0.46px #c9c9c9;letter-spacing:-0.2px;">K45</div>
<div id="t144" style="position:absolute;left:922.8px;transform-origin:0 0;top:1181.5px;font-size:12.8px;line-height:1;font-weight:400;color:#c9c9c9;white-space:nowrap;transform:translateX(-50%) scaleX(0.8600);transform-origin:50% 0;-webkit-text-stroke:0.46px #c9c9c9;letter-spacing:-0.2px;">Z</div>
<div id="t145" style="position:absolute;left:966.2px;transform-origin:0 0;top:1181.5px;font-size:12.8px;line-height:1;font-weight:400;color:#c9c9c9;white-space:nowrap;transform:translateX(-50%) scaleX(0.8600);transform-origin:50% 0;-webkit-text-stroke:0.46px #c9c9c9;letter-spacing:-0.2px;">X</div>
<div id="t146" style="position:absolute;left:1009.6px;transform-origin:0 0;top:1181.5px;font-size:12.8px;line-height:1;font-weight:400;color:#c9c9c9;white-space:nowrap;transform:translateX(-50%) scaleX(0.8600);transform-origin:50% 0;-webkit-text-stroke:0.46px #c9c9c9;letter-spacing:-0.2px;">C</div>
<div id="t147" style="position:absolute;left:1053.0px;transform-origin:0 0;top:1181.5px;font-size:12.8px;line-height:1;font-weight:400;color:#c9c9c9;white-space:nowrap;transform:translateX(-50%) scaleX(0.8600);transform-origin:50% 0;-webkit-text-stroke:0.46px #c9c9c9;letter-spacing:-0.2px;">V</div>
<div id="t148" style="position:absolute;left:1096.4px;transform-origin:0 0;top:1181.5px;font-size:12.8px;line-height:1;font-weight:400;color:#c9c9c9;white-space:nowrap;transform:translateX(-50%) scaleX(0.8600);transform-origin:50% 0;-webkit-text-stroke:0.46px #c9c9c9;letter-spacing:-0.2px;">B</div>
<div id="t149" style="position:absolute;left:1139.8px;transform-origin:0 0;top:1181.5px;font-size:12.8px;line-height:1;font-weight:400;color:#c9c9c9;white-space:nowrap;transform:translateX(-50%) scaleX(0.8600);transform-origin:50% 0;-webkit-text-stroke:0.46px #c9c9c9;letter-spacing:-0.2px;">N</div>
<div id="t150" style="position:absolute;left:1183.2px;transform-origin:0 0;top:1181.5px;font-size:12.8px;line-height:1;font-weight:400;color:#c9c9c9;white-space:nowrap;transform:translateX(-50%) scaleX(0.8600);transform-origin:50% 0;-webkit-text-stroke:0.46px #c9c9c9;letter-spacing:-0.2px;">M</div>
<div id="t151" style="position:absolute;left:1226.6px;transform-origin:0 0;top:1181.5px;font-size:12.8px;line-height:1;font-weight:400;color:#c9c9c9;white-space:nowrap;transform:translateX(-50%) scaleX(0.8600);transform-origin:50% 0;-webkit-text-stroke:0.46px #c9c9c9;letter-spacing:-0.2px;">,<</div>
<div id="t152" style="position:absolute;left:1270.0px;transform-origin:0 0;top:1181.5px;font-size:12.8px;line-height:1;font-weight:400;color:#c9c9c9;white-space:nowrap;transform:translateX(-50%) scaleX(0.8600);transform-origin:50% 0;-webkit-text-stroke:0.46px #c9c9c9;letter-spacing:-0.2px;">.></div>
<div id="t153" style="position:absolute;left:1313.4px;transform-origin:0 0;top:1181.5px;font-size:12.8px;line-height:1;font-weight:400;color:#c9c9c9;white-space:nowrap;transform:translateX(-50%) scaleX(0.8600);transform-origin:50% 0;-webkit-text-stroke:0.46px #c9c9c9;letter-spacing:-0.2px;">/?</div>
<div id="t154" style="position:absolute;left:1356.8px;transform-origin:0 0;top:1181.5px;font-size:12.8px;line-height:1;font-weight:400;color:#c9c9c9;white-space:nowrap;transform:translateX(-50%) scaleX(0.8600);transform-origin:50% 0;-webkit-text-stroke:0.46px #c9c9c9;letter-spacing:-0.2px;">K56</div>
<div id="t155" style="position:absolute;left:1421.3px;transform-origin:0 0;top:1181.5px;font-size:12.8px;line-height:1;font-weight:400;color:#c9c9c9;white-space:nowrap;transform:translateX(-50%) scaleX(0.8600);transform-origin:50% 0;-webkit-text-stroke:0.46px #c9c9c9;letter-spacing:-0.2px;">Shift</div>
<div id="t156" style="position:absolute;left:1540.9px;transform-origin:0 0;top:1181.5px;font-size:12.8px;line-height:1;font-weight:400;color:#c9c9c9;white-space:nowrap;transform:translateX(-50%) scaleX(0.8600);transform-origin:50% 0;-webkit-text-stroke:0.46px #c9c9c9;letter-spacing:-0.2px;">&#8593;</div>
<div id="t157" style="position:absolute;left:1640.0px;transform-origin:0 0;top:1181.5px;font-size:12.8px;line-height:1;font-weight:400;color:#c9c9c9;white-space:nowrap;transform:translateX(-50%) scaleX(0.8600);transform-origin:50% 0;-webkit-text-stroke:0.46px #c9c9c9;letter-spacing:-0.2px;">1</div>
<div id="t158" style="position:absolute;left:1683.5px;transform-origin:0 0;top:1181.5px;font-size:12.8px;line-height:1;font-weight:400;color:#c9c9c9;white-space:nowrap;transform:translateX(-50%) scaleX(0.8600);transform-origin:50% 0;-webkit-text-stroke:0.46px #c9c9c9;letter-spacing:-0.2px;">2</div>
<div id="t159" style="position:absolute;left:1727.1px;transform-origin:0 0;top:1181.5px;font-size:12.8px;line-height:1;font-weight:400;color:#c9c9c9;white-space:nowrap;transform:translateX(-50%) scaleX(0.8600);transform-origin:50% 0;-webkit-text-stroke:0.46px #c9c9c9;letter-spacing:-0.2px;">3</div>
<div style="position:absolute;left:0;top:0;width:1833px;height:1216px;overflow:hidden;pointer-events:none">
<div id="t160" style="position:absolute;left:1770.6px;transform-origin:0 0;top:1202.3px;font-size:12.8px;line-height:1;font-weight:400;color:#cfcfcf;white-space:nowrap;transform:translateX(-50%) scaleX(0.8600);transform-origin:50% 0;-webkit-text-stroke:0.46px #cfcfcf;letter-spacing:-0.2px;">Enter</div>
</div>
<svg width="1833" height="1216" style="left:0;top:0" viewBox="0 0 1833 1216"><path d="M818.6,967.1 V949.1 H826.1 L828.6,952.1 H843.6 V967.1 Z" fill="none" stroke="#e4e4e4" stroke-width="2"/><circle cx="831.1" cy="959.6" r="3.8" fill="none" stroke="#e4e4e4" stroke-width="2.6"/><rect x="874.2" y="945.1" width="24" height="25" rx="3" fill="none" stroke="#e4e4e4" stroke-width="2.2"/><path d="M877.7,953.1 H882.7 M880.2,950.6 V955.6 M888.7,953.1 H893.7" stroke="#e4e4e4" stroke-width="1.8"/><rect x="878.2" y="960.6" width="3.5" height="3.5" fill="#e4e4e4"/><rect x="889.2" y="960.6" width="3.5" height="3.5" fill="#e4e4e4"/><rect x="928.3000000000001" y="949.6" width="25" height="16.5" rx="1.5" fill="none" stroke="#e4e4e4" stroke-width="2"/><polyline points="928.8000000000001,950.1 940.8000000000001,959.1 952.8000000000001,950.1" fill="none" stroke="#e4e4e4" stroke-width="2"/><rect x="982.9" y="947.6" width="25" height="20.5" rx="1.5" fill="none" stroke="#e4e4e4" stroke-width="2"/><circle cx="989.4" cy="962.6" r="2.5" fill="none" stroke="#e4e4e4" stroke-width="1.6"/><path d="M991.9,962.6 C993.4,952.6 995.4,951.6 998.4,954.6 S1002.4,951.6 1003.4,951.6" fill="none" stroke="#e4e4e4" stroke-width="1.6"/><rect x="1037.5000000000002" y="948.1" width="25" height="19.5" rx="1.5" fill="none" stroke="#e4e4e4" stroke-width="2"/><polygon points="1044.5000000000002,951.4 1044.5000000000002,963.8000000000001 1054.6000000000001,957.6" fill="#e4e4e4"/><rect x="1092.1000000000001" y="948.1" width="25" height="19.5" rx="1.5" fill="none" stroke="#e4e4e4" stroke-width="2"/><rect x="1097.0000000000002" y="953.6" width="15.3" height="8.6" fill="#e4e4e4"/><rect x="1148.2000000000003" y="948.6" width="2.6" height="17.5" fill="#e4e4e4"/><polygon points="1168.2000000000003,948.6 1168.2000000000003,966.1 1151.7000000000003,957.4" fill="#e4e4e4"/><rect x="1222.2000000000003" y="948.6" width="2.6" height="17.5" fill="#e4e4e4"/><polygon points="1204.8000000000002,948.6 1204.8000000000002,966.1 1221.3000000000002,957.4" fill="#e4e4e4"/><polygon points="1256.9,953.6 1261.4,953.6 1269.4,946.6 1269.4,968.6 1261.4,961.6 1256.9,961.6" fill="#e4e4e4"/><path d="M1273.15,952.6 Q1276.15,957.6 1273.15,962.6" fill="none" stroke="#e4e4e4" stroke-width="1.8"/><path d="M1274.375,949.1 Q1279.4750000000001,957.6 1274.375,966.1" fill="none" stroke="#e4e4e4" stroke-width="1.8"/><path d="M1275.6000000000001,945.6 Q1282.8000000000002,957.6 1275.6000000000001,969.6" fill="none" stroke="#e4e4e4" stroke-width="1.8"/><polygon points="1311.5000000000002,953.6 1316.0000000000002,953.6 1324.0000000000002,946.6 1324.0000000000002,968.6 1316.0000000000002,961.6 1311.5000000000002,961.6" fill="#e4e4e4"/><path d="M1327.5000000000002,949.6 Q1332.5000000000002,957.6 1327.5000000000002,965.6" fill="none" stroke="#e4e4e4" stroke-width="2"/><polygon points="1366.1000000000001,953.6 1370.6000000000001,953.6 1378.6000000000001,946.6 1378.6000000000001,968.6 1370.6000000000001,961.6 1366.1000000000001,961.6" fill="#e4e4e4"/><path d="M1381.6000000000001,953.4 L1389.6000000000001,961.8000000000001 M1389.6000000000001,953.4 L1381.6000000000001,961.8000000000001" stroke="#e4e4e4" stroke-width="1.8"/><rect x="1419.7000000000003" y="948.1" width="25" height="19.5" rx="1.5" fill="none" stroke="#e4e4e4" stroke-width="2"/><polygon points="1439.7000000000003,950.1 1433.7000000000003,959.1 1424.7000000000003,965.1 1430.7000000000003,956.1" fill="#e4e4e4"/><circle cx="1432.2000000000003" cy="957.6" r="1.3" fill="#525252"/><path d="M1496.8000000000002,952.6 A11.5,11.5 0 1 0 1497.3000000000002,961.6" fill="none" stroke="#e4e4e4" stroke-width="2"/><polyline points="1490.8000000000002,947.1 1497.3000000000002,952.6 1497.8000000000002,945.6" fill="none" stroke="#e4e4e4" stroke-width="2"/><path d="M1551.4,952.6 A11.5,11.5 0 1 0 1551.9,961.6" fill="none" stroke="#e4e4e4" stroke-width="2"/><polyline points="1545.4,947.1 1551.9,952.6 1552.4,945.6" fill="none" stroke="#e4e4e4" stroke-width="2"/><path d="M1536.4,952.6 L1546.4,962.6 M1546.4,952.6 L1536.4,962.6" stroke="#e4e4e4" stroke-width="2"/><path d="M1584.0,955.3000000000001 H1608.0 M1593.0,962.9 H1608.0" stroke="#e4e4e4" stroke-width="2"/><polyline points="1590.0,950.6 1584.0,955.3000000000001" fill="none" stroke="#e4e4e4" stroke-width="2"/><path d="M1638.6000000000001,955.3000000000001 H1662.6000000000001 M1638.6000000000001,962.9 H1652.6000000000001" stroke="#e4e4e4" stroke-width="2"/><polyline points="1656.6000000000001,950.6 1662.6000000000001,955.3000000000001" fill="none" stroke="#e4e4e4" stroke-width="2"/><rect x="1692.7000000000003" y="948.1" width="25" height="19.5" rx="1.5" fill="none" stroke="#e4e4e4" stroke-width="2"/><polygon points="1705.20,951.40 1706.96,955.97 1711.86,956.24 1708.05,959.33 1709.31,964.06 1705.20,961.40 1701.09,964.06 1702.35,959.33 1698.54,956.24 1703.44,955.97" fill="#e4e4e4"/><path d="M1765.8000000000002,965.6 A10.5,10.5 0 1 1 1768.8000000000002,961.6" fill="none" stroke="#e4e4e4" stroke-width="2.2"/><path d="M1765.3000000000002,964.6 L1770.3000000000002,968.6" stroke="#e4e4e4" stroke-width="2.2"/></svg></body></html>
